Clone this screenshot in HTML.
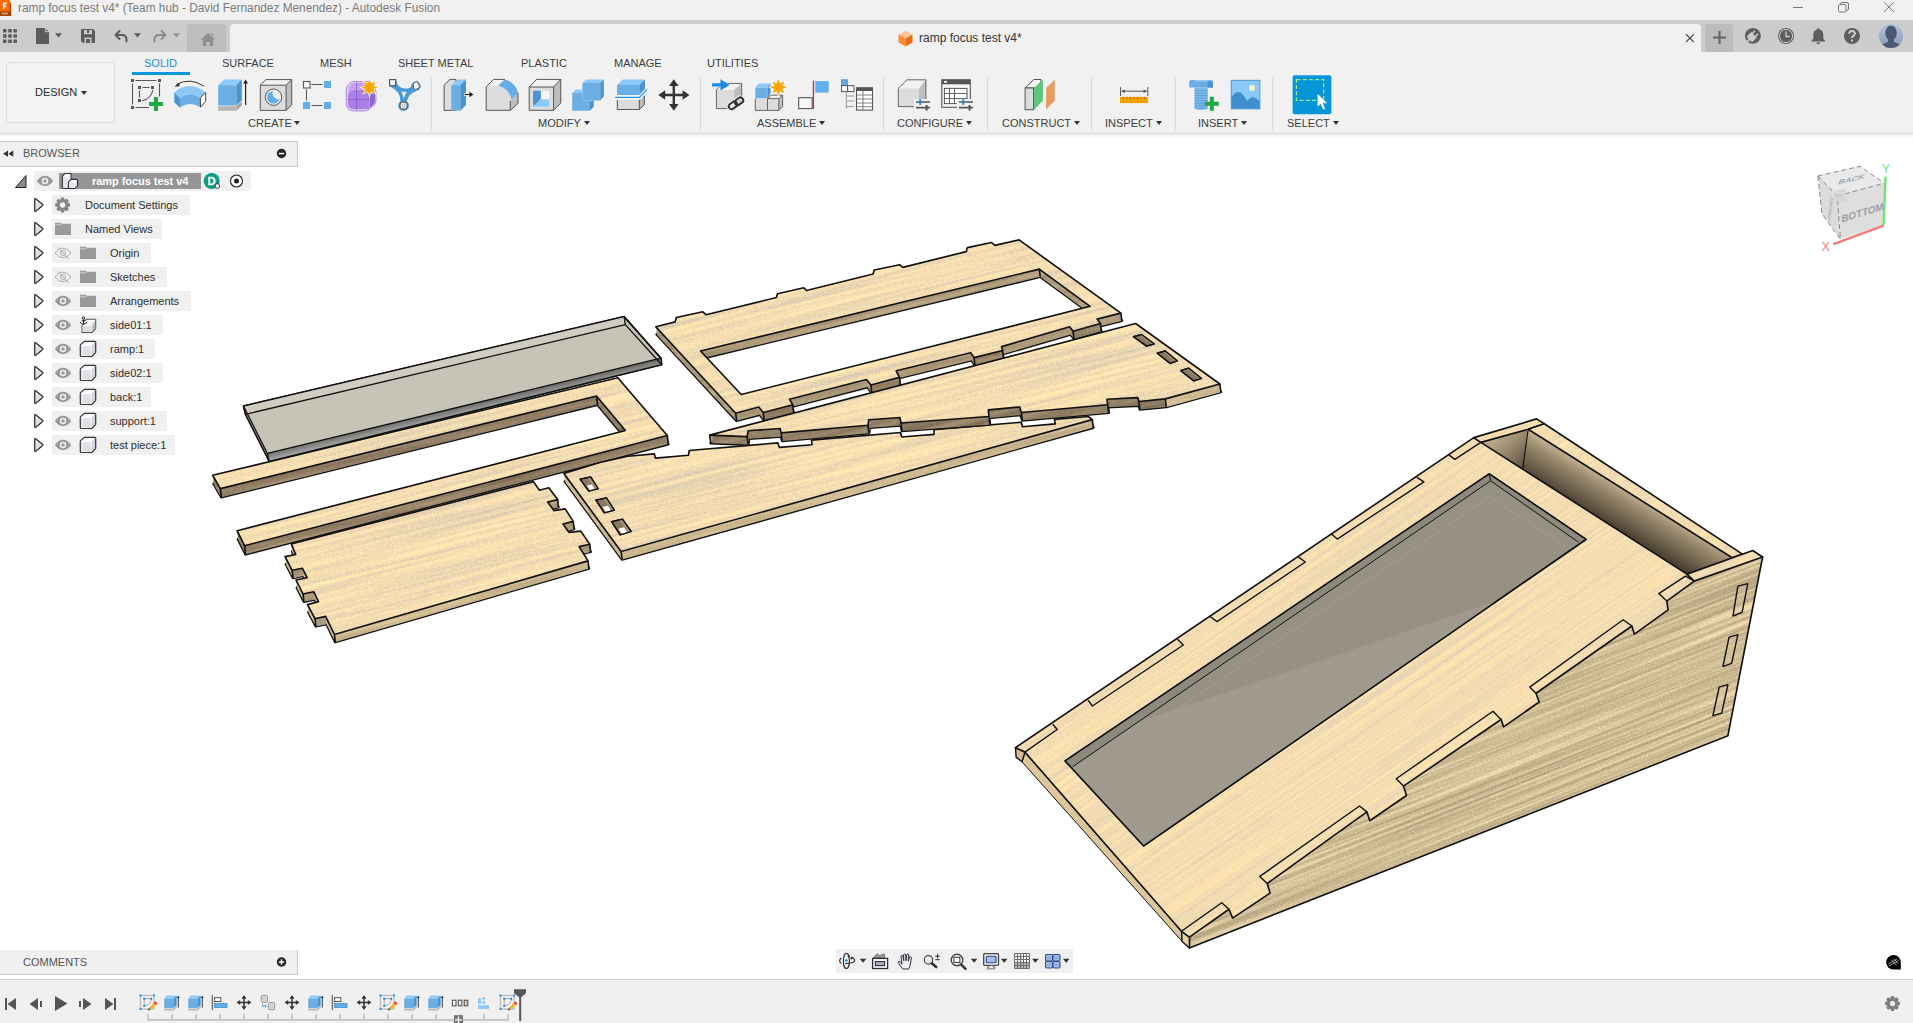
<!DOCTYPE html>
<html><head><meta charset="utf-8">
<style>
*{box-sizing:border-box;margin:0;padding:0}
html,body{width:1913px;height:1023px;overflow:hidden;background:#fff;font-family:"Liberation Sans",sans-serif;}
.abs{position:absolute}
#titlebar{left:0;top:0;width:1913px;height:20px;background:#f1f1f1}
#titletxt{left:18px;top:1px;font-size:11.85px;color:#7b7b7b;white-space:nowrap;line-height:15px}
#qat{left:0;top:20px;width:1913px;height:32px;background:#cccccc}
#hometab{left:187px;top:24px;width:39px;height:28px;background:#bdbdbd;border-radius:3px 3px 0 0}
#doctab{left:230px;top:24px;width:1471px;height:28px;background:#f1f1f1;border-radius:4px 4px 0 0}
#plustab{left:1705px;top:24px;width:28px;height:28px;background:#bcbcbc;border-radius:3px 3px 0 0}
#ribbon{left:0;top:52px;width:1913px;height:82px;background:#f1f1f1;border-bottom:1px solid #dadada}
#ribbonshadow{left:0;top:134px;width:1913px;height:3px;background:linear-gradient(#ececec,#fbfbfb)}
.tab{position:absolute;top:56px;font-size:11px;color:#3c3c3c;line-height:14px;white-space:nowrap}
.grp{position:absolute;top:116px;font-size:11px;color:#3c3c3c;line-height:14px;white-space:nowrap}
.sep{position:absolute;top:78px;width:1px;height:52px;background:#d9d9d9}
.dd{position:absolute;width:0;height:0;border-left:3.5px solid transparent;border-right:3.5px solid transparent;border-top:4px solid #333}
svg{position:absolute;overflow:visible}
.row{position:absolute;left:52px;height:20px;background:#f0f0f0}
.rtxt{position:absolute;font-size:11px;color:#2e2e2e;line-height:14px;white-space:nowrap}
.panel{position:absolute;left:0;width:298px;background:#f0f0f0;border:1px solid #c6c6c6;border-left:none}
.ptxt{position:absolute;left:23px;font-size:11px;color:#555;line-height:14px}
</style></head><body>

<!-- TITLE BAR + QAT -->
<div id="titlebar" class="abs"></div>
<div id="titletxt" class="abs">ramp focus test v4* (Team hub - David Fernandez Menendez) - Autodesk Fusion</div>
<div id="qat" class="abs"></div>
<div id="hometab" class="abs"></div>
<div id="doctab" class="abs"></div>
<div id="plustab" class="abs"></div>
<!-- app icon -->
<svg style="left:0;top:0" width="12" height="16" viewBox="0 0 12 16"><path d="M0 0H9.400L11.100 3.200V15.900H0Z" fill="#ff6b00"/><path d="M9.600 3.200H11.100V15.900H9.600Z" fill="#b84a00"/><path d="M0 11.300H11.100V15.900H0Z" fill="#a34200"/><rect x="1.600" y="12.500" width="6.200" height="1.900" fill="#dcae90" opacity=".85"/><path d="M2.900 2.500H6.700V3.900H4.500V5.200H6.300V6.600H4.500V8.800H2.900Z" fill="#fff"/></svg>
<!-- window controls -->
<svg style="left:1790px;top:0" width="123" height="20" viewBox="0 0 123 20" fill="none" stroke="#777" stroke-width="1">
<path d="M3 7.5H13"/><rect x="48.5" y="4.5" width="7.5" height="7.5" rx="1.3"/><path d="M50.5 4.5V3.8Q50.5 2.5 51.8 2.5H57Q58.5 2.5 58.5 4V9Q58.5 10.3 57.2 10.3H56.2"/>
<path d="M94 2.2L104 12M104 2.2L94 12"/></svg>
<!-- QAT icons -->
<svg style="left:0;top:20px" width="230" height="32" viewBox="0 20 230 32">
<g fill="#5c5c5c">
<rect x="3" y="29" width="3.6" height="3.6" rx=".6"/><rect x="8.2" y="29" width="3.6" height="3.6" rx=".6"/><rect x="13.4" y="29" width="3.6" height="3.6" rx=".6"/>
<rect x="3" y="34.2" width="3.6" height="3.6" rx=".6"/><rect x="8.2" y="34.2" width="3.6" height="3.6" rx=".6"/><rect x="13.4" y="34.2" width="3.6" height="3.6" rx=".6"/>
<rect x="3" y="39.4" width="3.6" height="3.6" rx=".6"/><rect x="8.2" y="39.4" width="3.6" height="3.6" rx=".6"/><rect x="13.4" y="39.4" width="3.6" height="3.6" rx=".6"/>
<path d="M36.8 28H45L49 32V43Q49 44 48 44H36.8Q36 44 36 43V29Q36 28 36.8 28Z"/>
<path d="M55 33.2H62L58.5 37.6Z"/>
<path d="M82 29H93L95 31V42Q95 43 94 43H83L81 41V30Q81 29 82 29Z"/>
<path d="M134 33.2H141L137.500 37.6Z"/>
</g>
<path d="M45.300 28.300V31.700H48.700" fill="none" stroke="#ccc" stroke-width="1"/>
<g fill="#ccc"><rect x="84" y="30" width="8" height="4.200"/><rect x="84.500" y="37.500" width="7" height="5.500"/></g>
<g fill="#5c5c5c"><rect x="87" y="30" width="2.200" height="3"/><rect x="86" y="39" width="4" height="4"/></g>
<path d="M119.500 31L115.500 35L119.500 39M115.800 35H122Q126.500 35 126.500 39.500V41.500" fill="none" stroke="#5c5c5c" stroke-width="2" stroke-linecap="round" stroke-linejoin="round"/>
<path d="M161.500 31L165.500 35L161.500 39M165.200 35H159Q154.500 35 154.500 39.500V41.500" fill="none" stroke="#8c8c8c" stroke-width="2" stroke-linecap="round" stroke-linejoin="round"/>
<path d="M173 33.200H180L176.500 37.600Z" fill="#959595"/>
<path d="M208 33L200.800 39.600H202.800V46H206.500V42H209.500V46H213.200V39.600H215.200ZM211.500 33.500H213V36L211.500 34.800Z" fill="#8f8f8f"/>
</svg>
<!-- doc tab title -->
<svg style="left:898px;top:30px" width="16" height="18" viewBox="0 0 16 18"><path d="M7.500 .800L14.500 4.500L7.500 8.500L.500 4.500Z" fill="#ffc49a"/><path d="M.500 4.500L7.500 8.500V16.500L.500 12.500Z" fill="#ff8a3c"/><path d="M14.500 4.500L7.500 8.500V16.500L14.500 12.500Z" fill="#f26a10"/></svg>
<div class="abs" style="left:919px;top:31px;font-size:12px;line-height:14px;color:#333;white-space:nowrap">ramp focus test v4*</div>
<!-- close tab x, plus, right icons -->
<svg style="left:1680px;top:20px" width="233" height="32" viewBox="1680 20 233 32">
<path d="M1686 34.200L1693.800 42M1693.800 34.200L1686 42" stroke="#555" stroke-width="1.300" fill="none"/>
<path d="M1719.500 31V44M1713 37.500H1726" stroke="#666" stroke-width="2.200" fill="none"/>
<g fill="#5e5e5e">
<circle cx="1752.900" cy="35.900" r="7.900"/>
<circle cx="1786" cy="36" r="8"/>
<path d="M1818.300 28.200Q1819.600 28.200 1819.600 29.600Q1823.300 30.600 1823.300 35V38.500L1825 40.800V41.500H1811.600V40.800L1813.300 38.500V35Q1813.300 30.600 1817 29.600Q1817 28.200 1818.300 28.200ZM1816.300 42.500H1820.300Q1820.300 44.300 1818.300 44.300Q1816.300 44.300 1816.300 42.500Z"/>
<circle cx="1852" cy="36" r="8"/>
</g>
<g transform="rotate(-45 1752.900 35.900) translate(1752.900 35.900)" fill="#ccc"><path d="M-5.200 -2Q-5.200 -4 -3.200 -4H1.600V4H-3.200Q-5.200 4 -5.200 2Z"/><rect x="1.400" y="-2.900" width="3.600" height="1.500"/><rect x="1.400" y="1.400" width="3.600" height="1.500"/><rect x="-9" y="-.900" width="5" height="1.800"/></g>
<circle cx="1786" cy="36" r="6.600" fill="none" stroke="#ccc" stroke-width="1"/>
<path d="M1786 31.500V36.500H1790" stroke="#ccc" stroke-width="1.300" fill="none"/>
<path d="M1849.200 33.800Q1849.200 31 1852 31Q1854.900 31 1854.900 33.500Q1854.900 35 1853.300 35.800Q1852 36.500 1852 38" stroke="#ccc" stroke-width="2" fill="none"/><rect x="1851" y="39.500" width="2" height="2" fill="#ccc"/>
<defs><clipPath id="avc"><circle cx="1891" cy="36" r="12"/></clipPath><linearGradient id="avg" x1="0" y1="0" x2="0" y2="1"><stop offset="0" stop-color="#b3c2d8"/><stop offset="1" stop-color="#8b9bb6"/></linearGradient></defs>
<circle cx="1891" cy="36" r="12" fill="url(#avg)"/>
<g clip-path="url(#avc)" fill="#4b5973"><ellipse cx="1891" cy="33" rx="5.800" ry="7.500"/><path d="M1888 38H1894V42Q1901 43.500 1903 49H1879Q1881 43.500 1888 42Z"/></g>
</svg>

<!-- RIBBON -->
<div id="ribbon" class="abs"></div>
<div id="ribbonshadow" class="abs"></div>
<div class="abs" style="left:6px;top:62px;width:109px;height:61px;border:1px solid #dcdcdc;border-radius:4px;background:#f3f3f3"></div>
<div class="abs" style="left:35px;top:85px;font-size:11px;line-height:14px;color:#2c2c2c">DESIGN</div>
<div class="dd" style="left:81px;top:91px"></div>
<div class="tab" style="left:144px;color:#1492d8">SOLID</div>
<div class="abs" style="left:132px;top:72px;width:58px;height:3px;background:#0696d7"></div>
<div class="tab" style="left:222px">SURFACE</div>
<div class="tab" style="left:320px">MESH</div>
<div class="tab" style="left:398px">SHEET METAL</div>
<div class="tab" style="left:521px">PLASTIC</div>
<div class="tab" style="left:614px">MANAGE</div>
<div class="tab" style="left:707px">UTILITIES</div>
<div class="grp" style="left:248px">CREATE</div><div class="dd" style="left:294px;top:121px"></div>
<div class="grp" style="left:538px">MODIFY</div><div class="dd" style="left:584px;top:121px"></div>
<div class="grp" style="left:757px">ASSEMBLE</div><div class="dd" style="left:819px;top:121px"></div>
<div class="grp" style="left:897px">CONFIGURE</div><div class="dd" style="left:966px;top:121px"></div>
<div class="grp" style="left:1002px">CONSTRUCT</div><div class="dd" style="left:1074px;top:121px"></div>
<div class="grp" style="left:1105px">INSPECT</div><div class="dd" style="left:1156px;top:121px"></div>
<div class="grp" style="left:1198px">INSERT</div><div class="dd" style="left:1241px;top:121px"></div>
<div class="grp" style="left:1287px">SELECT</div><div class="dd" style="left:1333px;top:121px"></div>
<div class="sep" style="left:431px"></div><div class="sep" style="left:700px"></div><div class="sep" style="left:883px"></div>
<div class="sep" style="left:987px"></div><div class="sep" style="left:1091px"></div><div class="sep" style="left:1175px"></div><div class="sep" style="left:1272px"></div>
<!-- RIBBON-ICONS -->
<svg style="left:0;top:52px" width="1913" height="82" viewBox="0 52 1913 82">
<defs>
<g id="star"><path d="M0 -8.500L1.600 -3.900L6 -6L3.900 -1.600L8.500 0L3.900 1.600L6 6L1.600 3.900L0 8.500L-1.600 3.900L-6 6L-3.900 1.600L-8.500 0L-3.900 -1.600L-6 -6L-1.600 -3.900Z" fill="#f7a500" stroke="#fff" stroke-width="1.200" paint-order="stroke"/></g>
<g id="plus"><path d="M-2 -7H2V-2H7V2H2V7H-2V2H-7V-2H-2Z" fill="#21a845"/></g>
</defs>
<!-- 1 create sketch -->
<g fill="#555" stroke="none">
<rect x="131" y="79" width="3" height="3"/><rect x="158" y="79" width="3" height="3"/><rect x="131" y="106" width="3" height="3"/>
<rect x="138" y="86" width="3" height="3"/><rect x="151" y="86" width="3" height="3"/><rect x="138" y="99" width="3" height="3"/>
</g>
<g stroke="#555" stroke-width="1.100" fill="none">
<path d="M135.500 80.500H156.500M132.500 83.500V104.500M159.500 83.500V96.500M135.500 107.500H149"/>
<path d="M142.500 87.500H149.500M139.500 90.500V97.500"/><path d="M152.800 90Q151.500 98.500 142 100.800"/>
</g>
<use href="#plus" x="156" y="104"/>
<!-- 2 revolve -->
<path d="M174.300 92.400Q189 79.800 205.600 92.400L200.200 97.800Q189.800 90.500 180 98.300Z" fill="#8cc8f8"/>
<path d="M180 98.300Q189.800 90.500 200.200 97.800V107.300Q189.800 100.500 180 107.700Z" fill="#6aaee4"/>
<path d="M174.300 92.400L180 98.300V107.700L174.300 102.300Z" fill="#4b92cf"/>
<path d="M200.300 97.800L205.700 92.600V101.400L200.500 107.200Z" fill="#fff" stroke="#444" stroke-width="1"/>
<path d="M203.800 86.100Q190 77 176.500 84.500" fill="none" stroke="#333" stroke-width="1"/><path d="M174.400 86.800L179.300 82.600L179.600 86.300Z" fill="#333"/>
<!-- 3 extrude -->
<path d="M218.200 85.200L224 79.400H241.800L236.400 85.200Z" fill="#8cc8f8"/><rect x="218.200" y="85.200" width="18.200" height="20.300" fill="#6aaee4"/>
<path d="M236.400 85.200L241.800 79.400V100.500L236.400 105.500Z" fill="#4b92cf"/>
<path d="M218.200 106.200H236.400V110.700H218.200Z" fill="#b6b6b6"/><path d="M236.400 106.200L241.800 101.200V105.500L236.400 110.700Z" fill="#a2a2a2"/>
<path d="M245.600 105V82" stroke="#222" stroke-width="1.200"/><path d="M243.200 83.600L245.600 79.600L248 83.600Z" fill="#222"/>
<!-- 4 hole -->
<path d="M260.300 85.200L265.800 79.600H291.700L286.100 85.200Z" fill="#f2f2f2"/><rect x="260.300" y="85.200" width="25.800" height="25.200" fill="#dcdcdc"/>
<path d="M286.100 85.200L291.700 79.600V105L286.100 110.400Z" fill="#bebebe"/>
<path d="M260.300 85.200L265.800 79.600H291.700V105L286.100 110.400H260.300ZM260.300 85.200H286.100V110.400M286.100 85.200L291.700 79.600" fill="none" stroke="#555" stroke-width="1"/>
<circle cx="273.500" cy="97.200" r="8.200" fill="#eee" stroke="#555" stroke-width="1"/>
<path d="M268.700 92.900A6.400 6.400 0 1 0 279.500 99.300A6 6 0 0 1 273 91.200A6.400 6.400 0 0 0 268.700 92.900Z" fill="#63aee8"/>
<!-- 5 pattern -->
<rect x="303.500" y="81.500" width="6.500" height="6.500" fill="#fff" stroke="#555" stroke-width="1.100"/>
<rect x="324" y="81" width="7" height="7" fill="#63aee8"/><rect x="303" y="102" width="7" height="7" fill="#63aee8"/><rect x="324" y="102" width="7" height="7" fill="#63aee8"/>
<path d="M311.500 84.500H322.500M306.500 89.500V100.500M311.500 105.500H322.500" stroke="#555" stroke-width="1.100" fill="none"/>
<!-- 6 form -->
<path d="M353 81.500H366Q376 82 376 92V101Q376 104 373 106L368 110Q366.500 111 364 111H354Q346.200 111 346.200 103V91Q346.200 84 353 81.500Z" fill="#d9c4f6" stroke="#a57be0" stroke-width=".800"/>
<path d="M355 90H366Q369 90 369 93V109H354Q348 109 348 103V96Q348 90 355 90Z" fill="#ab80e6"/>
<path d="M352.500 83.500Q356 82.500 365 83Q373.500 84 374 91L369 93Q369 89.500 365 89.500H354Q350 90 349 93Q348.500 86 352.500 83.500Z" fill="#c29df0"/>
<path d="M369.500 95L375 92V101Q375 103.500 373 105L369.500 108Z" fill="#9168cf"/>
<path d="M356.500 82.500V110M347.500 99.600H369" stroke="#8c62cb" stroke-width=".900" fill="none"/>
<use href="#star" x="369.500" y="87.500"/>
<!-- 7 Y shape -->
<path d="M390 86.500L396.300 80.500Q397.500 87.800 404.500 88.500L407.500 88.500Q411.800 88 412 83L416 91.200Q409.200 93 406.900 101L400.200 101Q400.800 91.500 390 86.500Z" fill="#4b9ad8"/>
<path d="M401.500 91.500L406.600 92L403.700 98Z" fill="#eef2f6"/>
<rect x="389.600" y="79.600" width="6.100" height="6.100" fill="#fff" stroke="#555" stroke-width="1.200"/>
<circle cx="416" cy="86.200" r="4.600" fill="#4b9ad8"/><path d="M413.200 84.200Q413.800 82.500 416 81.800L417 81.300L420.300 87L415.500 89.800Q412.500 88.500 413.200 84.200Z" fill="#f6f6f6" stroke="#555" stroke-width="1" stroke-linejoin="round"/>
<circle cx="403.600" cy="105.500" r="5.400" fill="#4b9ad8"/><circle cx="403.600" cy="105.500" r="3.700" fill="#fff" stroke="#555" stroke-width="1.200"/><circle cx="403.600" cy="105.500" r="1.600" fill="none" stroke="#777" stroke-width=".700"/>
<!-- 8 press pull -->
<path d="M444.100 85.200L450 79.400H456V110.400H444.100Z" fill="#dedede" stroke="#555" stroke-width="1"/>
<path d="M451.300 85.200L457.200 79.400H466L460.300 85.200Z" fill="#8cc8f8"/><rect x="451.300" y="85.200" width="9" height="25.500" fill="#6aaee4"/>
<path d="M460.300 85.200L466 79.400V105L460.300 110.700Z" fill="#4b92cf"/>
<path d="M464 94.500H470" stroke="#fff" stroke-width="2.600"/><path d="M464.500 94.500H470" stroke="#222" stroke-width="1.200"/><path d="M469.500 91.800L473.500 94.500L469.500 97.200Z" fill="#222"/>
<!-- 9 fillet -->
<path d="M486.200 87L493.400 79.400H504.900Q514 82 518 92.600L517.900 103.500L510.300 110.300H486.200Z" fill="#dcdcdc"/>
<path d="M486.200 87L493.400 79.400H504.900L498.300 85.400Q493 87 486.200 87Z" fill="#f2f2f2"/>
<path d="M511.500 99.200L518 92.600L517.900 103.500L510.300 110.300V101Z" fill="#bebebe"/>
<path d="M498.300 85.400L504.900 79.400Q515 82 518.100 92.600L511.500 99.200Q509 88.500 498.300 85.400Z" fill="#63aee8"/>
<path d="M486.200 87L493.400 79.400H504.900M518 93V103.500L510.300 110.300H486.200V87M510.300 110.300V101" fill="none" stroke="#555" stroke-width="1"/>
<!-- 10 shell -->
<path d="M529.200 87L536.500 79.400H560.800L553.600 87Z" fill="#f2f2f2"/><rect x="529.200" y="87" width="24.400" height="23.300" fill="#dcdcdc"/>
<path d="M553.600 87L560.800 79.400V102.900L553.600 110.300Z" fill="#bebebe"/>
<path d="M529.200 87L536.500 79.400H560.800V102.900L553.600 110.300H529.200ZM529.200 87H553.600V110.300M553.600 87L560.800 79.400" fill="none" stroke="#555" stroke-width="1"/>
<rect x="533.100" y="90.800" width="16" height="15.900" fill="#f6f6f6"/>
<path d="M533.100 90.800H540.900V99.200L533.100 106.700Z" fill="#4b92cf"/><path d="M540.900 99.200H549.100V106.700H533.100Z" fill="#8cc8f8"/>
<!-- 11 combine -->
<path d="M582.400 83L586 79.400H603.800L600.200 83Z" fill="#8cc8f8"/><rect x="582.400" y="83" width="17.800" height="17.500" fill="#6aaee4"/><path d="M600.200 83L603.800 79.400V96.200L600.200 100.500Z" fill="#4b92cf"/>
<path d="M572.200 93L575.800 89.400H583V93Z" fill="#8cc8f8"/><path d="M572.200 93H582.400V100.500H590V110.700H572.200Z" fill="#6aaee4"/><path d="M590 101L593.800 100.500V106.500L590 110.700Z" fill="#4b92cf"/>
<!-- 12 split -->
<path d="M617 85L622.700 79.400H645L639.300 85Z" fill="#8cc8f8"/><rect x="617" y="85" width="22.300" height="10" fill="#6aaee4"/><path d="M639.300 85L645 79.400V89L639.300 95Z" fill="#4b92cf"/>
<rect x="617.300" y="99.900" width="22" height="9.600" fill="#dcdcdc"/><path d="M639.300 99.900L644.300 95.600V104.700L639.300 109.500Z" fill="#bebebe"/>
<path d="M617.300 99.900V109.500H639.300L644.300 104.700V95.600M639.300 99.900V109.500" fill="none" stroke="#555" stroke-width="1"/>
<path d="M615.100 97.400H639.500L646.700 89.600" fill="none" stroke="#fff" stroke-width="3"/><path d="M615.100 97.400H639.500L646.700 89.600" fill="none" stroke="#1e90e6" stroke-width="1.300"/>
<!-- 13 move -->
<path d="M673.800 83V107M662 95H686" stroke="#333" stroke-width="2.400"/><path d="M673.800 79.200L678.600 86H669ZM673.800 110.800L678.600 104H669ZM658.300 95L665.200 90.200V99.800ZM689.500 95L682.600 90.200V99.800Z" fill="#333"/>
<!-- 14 insert derive -->
<path d="M716.400 89.900L722.700 83.400H741.700L734.100 89.900Z" fill="#f2f2f2"/><rect x="716.400" y="89.900" width="17.700" height="18.700" fill="#dcdcdc"/><path d="M734.100 89.900L741.700 83.400V99.800L734.100 108.600Z" fill="#bebebe"/>
<path d="M716.400 89.900L722.700 83.400H741.700V99.800L734.100 108.600H716.400Z" fill="none" stroke="#666" stroke-width="1"/>
<path d="M712.100 83.300H720.500V79.300L729.600 84.900L720.500 90.400V86.500H712.100Z" fill="#1e88e5" stroke="#f1f1f1" stroke-width=".800" paint-order="stroke"/>
<g fill="none" stroke="#f1f1f1" stroke-width="4.200"><rect x="728.500" y="102.500" width="9" height="5.600" rx="2.800" transform="rotate(-35 733 105.300)"/><rect x="734.500" y="98.500" width="9" height="5.600" rx="2.800" transform="rotate(-35 739 101.300)"/></g>
<g fill="none" stroke="#333" stroke-width="2"><rect x="728.500" y="102.500" width="9" height="5.600" rx="2.800" transform="rotate(-35 733 105.300)"/><rect x="734.500" y="98.500" width="9" height="5.600" rx="2.800" transform="rotate(-35 739 101.300)"/></g>
<!-- 15 new component -->
<path d="M755.300 87.600L758.400 83.400H770.500L767.500 87.600Z" fill="#8cc8f8"/><rect x="755.300" y="87.600" width="12.200" height="10.700" fill="#6aaee4"/><path d="M767.500 87.600L770.500 83.400V93.700L767.500 98.300Z" fill="#4b92cf"/>
<path d="M767.500 98.600L771.200 95.200H782.600L778.800 98.600Z" fill="#f2f2f2"/><rect x="755.300" y="98.600" width="23.500" height="11.800" fill="#dcdcdc"/><path d="M778.800 98.600L782.600 95.200V106.600L778.800 110.400Z" fill="#bebebe"/>
<path d="M755.300 98.600V110.400H778.800L782.600 106.600V95.200H771.200L767.500 98.600H778.800V110.400M767.500 98.600V110.400M778.800 98.600L782.600 95.200" fill="none" stroke="#666" stroke-width="1"/>
<use href="#star" x="778.400" y="87.300"/>
<!-- 16 joint -->
<rect x="798.700" y="97.700" width="13.500" height="10.900" fill="#f6f6f6" stroke="#555" stroke-width="1.100"/>
<rect x="815.200" y="81.100" width="13.600" height="11.500" fill="#63aee8"/>
<path d="M813.400 80.800V108.900" stroke="#d9262c" stroke-width="1.300"/>
<!-- 17 table -->
<rect x="841.500" y="79.800" width="6" height="5.800" fill="#63aee8" stroke="#4b92cf" stroke-width=".800"/>
<rect x="841.500" y="85.600" width="6.200" height="6" fill="#fff" stroke="#555" stroke-width="1"/><rect x="847.700" y="85.600" width="6.200" height="6" fill="#fff" stroke="#555" stroke-width="1"/>
<path d="M846.300 92V108.500M846.300 96H854M846.300 101H854M846.300 106.500H854" stroke="#999" stroke-width="1" fill="none"/>
<rect x="856.500" y="87.800" width="16" height="22.300" fill="#fff" stroke="#555" stroke-width="1.100"/><rect x="856.500" y="87.800" width="16" height="3.200" fill="#555"/>
<path d="M856.500 95H872.500M856.500 99H872.500M856.500 103H872.500M856.500 106.700H872.500M863 91V110" stroke="#666" stroke-width=".800" fill="none"/>
<!-- 18 configure -->
<path d="M898.300 88.400L906.900 79.800H925.900L919 88.400Z" fill="#f2f2f2"/><rect x="898.300" y="88.400" width="20.700" height="18.200" fill="#dcdcdc"/><path d="M919 88.400L925.900 79.800V99L919 106.600Z" fill="#bebebe"/>
<path d="M898.300 88.400L906.900 79.800H925.900V99L919 106.600H898.300Z" fill="none" stroke="#666" stroke-width="1"/>
<g id="sliders"><path d="M914 99H931V111H914Z" fill="#f1f1f1"/><path d="M916 102H930M916 107.600H930" stroke="#555" stroke-width="1.600"/><rect x="919.200" y="99.300" width="2" height="5.600" fill="#1e88e5"/><rect x="925.600" y="105" width="2" height="5.600" fill="#555"/></g>
<!-- 19 configure table -->
<rect x="941.800" y="79.800" width="28.500" height="27.500" fill="#f6f6f6" stroke="#555" stroke-width="1.100"/><rect x="941.800" y="79.800" width="28.500" height="4.500" fill="#555"/><rect x="944" y="81" width="3" height="1.600" fill="#fff"/>
<rect x="944.400" y="88.400" width="22.600" height="15.200" fill="#fff" stroke="#555" stroke-width="1"/><path d="M944.400 93.500H967M944.400 98.500H967M949.500 88.400V103.600M954.500 88.400V103.600" stroke="#555" stroke-width=".900" fill="none"/>
<use href="#sliders" x="43" y="0"/>
<!-- 20 construct -->
<path d="M1025.100 88L1034 79.500H1041V88Z" fill="#f2f2f2" stroke="#555" stroke-width="1"/><rect x="1025.100" y="88" width="8.500" height="21.700" fill="#dcdcdc" stroke="#555" stroke-width="1"/>
<path d="M1034 88L1042.900 79.500V100.400L1034 109.700Z" fill="#5cc47c"/><path d="M1046.100 88L1054.800 79.500V100.400L1046.100 109.700Z" fill="#e89b62"/>
<!-- 21 inspect -->
<path d="M1120.600 87.100V96M1147.800 87.100V96M1122 91.200H1146.500" stroke="#555" stroke-width="1" fill="none"/><path d="M1121.200 91.200L1124.800 89.400V93ZM1147.200 91.200L1143.600 89.400V93Z" fill="#555"/>
<rect x="1120" y="96.900" width="28" height="6.200" fill="#f5a300"/><path d="M1123.500 97V99.500M1127 97V98.700M1130.500 97V99.500M1134 97V98.700M1137.500 97V99.500M1141 97V98.700M1144.500 97V99.500" stroke="#9a6500" stroke-width=".900"/>
<!-- 22 bolt -->
<path d="M1189.200 81.500L1190.500 80H1211.700L1213 81.500V87.600H1189.200Z" fill="#6aaee4"/><path d="M1195 80H1208L1209 81.500H1194Z" fill="#8cc8f8"/><path d="M1207.500 81.500H1213V87.600H1207.500Z" fill="#4b92cf"/>
<path d="M1194.500 87.600H1207.700V108.500Q1201 111.500 1194.500 108.500Z" fill="#7ab8ea"/>
<path d="M1194.500 90.500H1207.700M1194.500 93H1207.700M1194.500 95.500H1207.700M1194.500 98H1207.700M1194.500 100.500H1207.700M1194.500 103H1207.700M1194.500 105.500H1207.700M1194.500 108H1207.700" stroke="#5a9bd8" stroke-width=".800"/>
<path d="M1202.200 95.500H1220.500V111.500H1202.200Z" fill="#f1f1f1" opacity=".0"/>
<use href="#plus" x="1211.800" y="103.800"/>
<!-- 23 image -->
<rect x="1231.200" y="80.300" width="28.700" height="28.600" fill="#8cc8f8" stroke="#4b92cf" stroke-width=".900"/>
<path d="M1231.600 97Q1238 88 1243.500 95.500L1247.500 101Q1252.500 93.500 1259.500 101.500V108.500H1231.600Z" fill="#3f8fd0"/><circle cx="1252.100" cy="88" r="2.900" fill="#fff5c0"/>
<!-- 24 select -->
<rect x="1292.600" y="75.300" width="38.800" height="39" rx="2" fill="#0696d7"/>
<rect x="1296.400" y="79.600" width="27.300" height="20.800" fill="none" stroke="#98f098" stroke-width="1.200" stroke-dasharray="4 2.200"/>
<path d="M1317.200 93.300V107.200L1320.600 104.300L1323 110L1325.600 108.900L1323.200 103.400L1327.800 103.200Z" fill="#fff" stroke="#0a6aa8" stroke-width=".500"/>
</svg>

<!-- VIEWPORT -->
<svg style="left:0;top:137px" width="1913" height="842" viewBox="0 137 1913 842">
<defs>
<filter id="fw" x="0" y="0" width="100%" height="100%" color-interpolation-filters="sRGB"><feTurbulence type="fractalNoise" baseFrequency="0.004 0.3" numOctaves="2" seed="3" stitchTiles="stitch" result="n1"/><feTurbulence type="fractalNoise" baseFrequency="0.85 0.85" numOctaves="1" seed="7" stitchTiles="stitch" result="n2"/><feColorMatrix in="n1" type="matrix" values="0.3 0 0 0 0.7900  0.19 0 0 0 0.7480  0.0 0 0 0 0.6770  0 0 0 0 1" result="c1"/><feColorMatrix in="n2" type="matrix" values="0.5 0 0 0 -0.25  0.5 0 0 0 -0.25  0.5 0 0 0 -0.25  0 0 0 0 1" result="c2"/><feComposite in="c1" in2="c2" operator="arithmetic" k1="0" k2="1" k3="1" k4="0"/></filter>
<filter id="fwr" x="0" y="0" width="100%" height="100%" color-interpolation-filters="sRGB"><feTurbulence type="fractalNoise" baseFrequency="0.003 0.42" numOctaves="2" seed="13" stitchTiles="stitch" result="n1"/><feTurbulence type="fractalNoise" baseFrequency="0.8 0.8" numOctaves="1" seed="17" stitchTiles="stitch" result="n2"/><feColorMatrix in="n1" type="matrix" values="0.22 0 0 0 0.8420  0.12 0 0 0 0.7950  -0.04 0 0 0 0.7050  0 0 0 0 1" result="c1"/><feColorMatrix in="n2" type="matrix" values="0.25 0 0 0 -0.125  0.25 0 0 0 -0.125  0.25 0 0 0 -0.125  0 0 0 0 1" result="c2"/><feComposite in="c1" in2="c2" operator="arithmetic" k1="0" k2="1" k3="1" k4="0"/></filter>
<filter id="fd" x="0" y="0" width="100%" height="100%" color-interpolation-filters="sRGB"><feTurbulence type="fractalNoise" baseFrequency="0.01 0.2" numOctaves="2" seed="5" stitchTiles="stitch" result="n1"/><feTurbulence type="fractalNoise" baseFrequency="0.9 0.9" numOctaves="1" seed="9" stitchTiles="stitch" result="n2"/><feColorMatrix in="n1" type="matrix" values="0.25 0 0 0 0.4320  0.25 0 0 0 0.3650  0.22 0 0 0 0.2740  0 0 0 0 1" result="c1"/><feColorMatrix in="n2" type="matrix" values="0.4 0 0 0 -0.2  0.4 0 0 0 -0.2  0.4 0 0 0 -0.2  0 0 0 0 1" result="c2"/><feComposite in="c1" in2="c2" operator="arithmetic" k1="0" k2="1" k3="1" k4="0"/></filter>
<filter id="fdm" x="0" y="0" width="100%" height="100%" color-interpolation-filters="sRGB"><feTurbulence type="fractalNoise" baseFrequency="0.01 0.2" numOctaves="2" seed="6" stitchTiles="stitch" result="n1"/><feTurbulence type="fractalNoise" baseFrequency="0.9 0.9" numOctaves="1" seed="10" stitchTiles="stitch" result="n2"/><feColorMatrix in="n1" type="matrix" values="0.25 0 0 0 0.5350  0.25 0 0 0 0.4650  0.22 0 0 0 0.3550  0 0 0 0 1" result="c1"/><feColorMatrix in="n2" type="matrix" values="0.4 0 0 0 -0.2  0.4 0 0 0 -0.2  0.4 0 0 0 -0.2  0 0 0 0 1" result="c2"/><feComposite in="c1" in2="c2" operator="arithmetic" k1="0" k2="1" k3="1" k4="0"/></filter>
<filter id="fdl" x="0" y="0" width="100%" height="100%" color-interpolation-filters="sRGB"><feTurbulence type="fractalNoise" baseFrequency="0.01 0.2" numOctaves="2" seed="8" stitchTiles="stitch" result="n1"/><feTurbulence type="fractalNoise" baseFrequency="0.9 0.9" numOctaves="1" seed="12" stitchTiles="stitch" result="n2"/><feColorMatrix in="n1" type="matrix" values="0.2 0 0 0 0.6900  0.2 0 0 0 0.6100  0.18 0 0 0 0.4600  0 0 0 0 1" result="c1"/><feColorMatrix in="n2" type="matrix" values="0.35 0 0 0 -0.175  0.35 0 0 0 -0.175  0.35 0 0 0 -0.175  0 0 0 0 1" result="c2"/><feComposite in="c1" in2="c2" operator="arithmetic" k1="0" k2="1" k3="1" k4="0"/></filter>
<filter id="fm" x="0" y="0" width="100%" height="100%" color-interpolation-filters="sRGB"><feTurbulence type="fractalNoise" baseFrequency="0.0025 0.36" numOctaves="2" seed="11" stitchTiles="stitch" result="n1"/><feTurbulence type="fractalNoise" baseFrequency="0.8 0.8" numOctaves="1" seed="15" stitchTiles="stitch" result="n2"/><feColorMatrix in="n1" type="matrix" values="0.46 0 0 0 0.5660  0.43 0 0 0 0.5080  0.38 0 0 0 0.3790  0 0 0 0 1" result="c1"/><feColorMatrix in="n2" type="matrix" values="0.5 0 0 0 -0.25  0.5 0 0 0 -0.25  0.5 0 0 0 -0.25  0 0 0 0 1" result="c2"/><feComposite in="c1" in2="c2" operator="arithmetic" k1="0" k2="1" k3="1" k4="0"/></filter>
<pattern id="pw0" width="640" height="320" patternUnits="userSpaceOnUse"><rect width="640" height="320" filter="url(#fw)"/></pattern>
<pattern id="pwr0" width="640" height="320" patternUnits="userSpaceOnUse"><rect width="640" height="320" filter="url(#fwr)"/></pattern>
<pattern id="pd0" width="640" height="320" patternUnits="userSpaceOnUse"><rect width="640" height="320" filter="url(#fd)"/></pattern>
<pattern id="pdm0" width="640" height="320" patternUnits="userSpaceOnUse"><rect width="640" height="320" filter="url(#fdm)"/></pattern>
<pattern id="pdl0" width="640" height="320" patternUnits="userSpaceOnUse"><rect width="640" height="320" filter="url(#fdl)"/></pattern>
<pattern id="pm0" width="640" height="320" patternUnits="userSpaceOnUse"><rect width="640" height="320" filter="url(#fm)"/></pattern>
<pattern id="pw" href="#pw0" patternTransform="rotate(-14)"/>
<pattern id="pd" href="#pd0" patternTransform="rotate(-14)"/>
<pattern id="pdm" href="#pdm0" patternTransform="rotate(-14)"/>
<pattern id="pdl" href="#pdl0" patternTransform="rotate(-14)"/>
<pattern id="pwr" href="#pwr0" patternTransform="rotate(-34)"/>
<pattern id="pmr" href="#pm0" patternTransform="rotate(-21.5)"/>
<linearGradient id="gglass" gradientUnits="userSpaceOnUse" x1="460" y1="406.9" x2="461.9" y2="414.9"><stop offset="0" stop-color="#6b6b6a"/><stop offset="1" stop-color="#a8a8a6"/></linearGradient>
<linearGradient id="gback" gradientUnits="userSpaceOnUse" x1="1633" y1="493" x2="1612" y2="528"><stop offset="0" stop-color="#c2b191"/><stop offset=".3" stop-color="#96866a"/><stop offset=".7" stop-color="#6a5e4a"/><stop offset="1" stop-color="#453c2f"/></linearGradient>
<linearGradient id="gleft" gradientUnits="userSpaceOnUse" x1="1495" y1="437" x2="1524" y2="466"><stop offset="0" stop-color="#bcab8b"/><stop offset=".5" stop-color="#94846a"/><stop offset="1" stop-color="#5d5241"/></linearGradient>
</defs>
<path d="M213.7 483.9L618.8 386.4L668.3 444.1L245.6 554.3L238.1 539.3L626.4 439.1L597.5 404.6L221.3 497.2Z" fill="url(#pd)" fill-rule="evenodd" stroke="#111" stroke-width="2.65" stroke-linejoin="round"/>
<path d="M213.7 483.9L618.8 386.4L668.3 444.1L245.6 554.3L238.1 539.3L626.4 439.1L597.5 404.6L221.3 497.2Z" fill="url(#pd)" fill-rule="evenodd"/>
<path d="M213.7 483.4L618.8 385.9L668.3 443.6L245.6 553.8L238.1 538.8L626.4 438.6L597.5 404.1L221.3 496.7Z" fill="url(#pd)" fill-rule="evenodd"/>
<path d="M213.6 482.9L618.7 385.4L668.2 443.1L245.5 553.3L238.0 538.3L626.3 438.1L597.4 403.6L221.2 496.2Z" fill="url(#pd)" fill-rule="evenodd"/>
<path d="M213.5 482.4L618.6 384.9L668.1 442.6L245.4 552.8L237.9 537.8L626.2 437.6L597.3 403.1L221.1 495.7Z" fill="url(#pd)" fill-rule="evenodd"/>
<path d="M213.5 481.9L618.6 384.4L668.1 442.1L245.4 552.3L237.9 537.3L626.2 437.1L597.3 402.6L221.1 495.2Z" fill="url(#pd)" fill-rule="evenodd"/>
<path d="M213.4 481.4L618.5 383.9L668.0 441.6L245.3 551.8L237.8 536.8L626.1 436.6L597.2 402.1L221.0 494.7Z" fill="url(#pd)" fill-rule="evenodd"/>
<path d="M213.4 480.9L618.5 383.4L668.0 441.1L245.3 551.3L237.8 536.3L626.1 436.1L597.2 401.6L221.0 494.2Z" fill="url(#pd)" fill-rule="evenodd"/>
<path d="M213.3 480.4L618.4 382.9L667.9 440.6L245.2 550.8L237.7 535.8L626.0 435.6L597.1 401.1L220.9 493.7Z" fill="url(#pd)" fill-rule="evenodd"/>
<path d="M213.2 479.9L618.3 382.4L667.8 440.1L245.1 550.3L237.6 535.3L625.9 435.1L597.0 400.6L220.8 493.2Z" fill="url(#pd)" fill-rule="evenodd"/>
<path d="M213.2 479.3L618.3 381.8L667.8 439.5L245.1 549.7L237.6 534.7L625.9 434.5L597.0 400.0L220.8 492.6Z" fill="url(#pd)" fill-rule="evenodd"/>
<path d="M213.1 478.8L618.2 381.3L667.7 439.0L245.0 549.2L237.5 534.2L625.8 434.0L596.9 399.5L220.7 492.1Z" fill="url(#pd)" fill-rule="evenodd"/>
<path d="M213.1 478.3L618.2 380.8L667.7 438.5L245.0 548.7L237.5 533.7L625.8 433.5L596.9 399.0L220.7 491.6Z" fill="url(#pd)" fill-rule="evenodd"/>
<path d="M213.0 477.8L618.1 380.3L667.6 438.0L244.9 548.2L237.4 533.2L625.7 433.0L596.8 398.5L220.6 491.1Z" fill="url(#pd)" fill-rule="evenodd"/>
<path d="M212.9 477.3L618.0 379.8L667.5 437.5L244.8 547.7L237.3 532.7L625.6 432.5L596.7 398.0L220.5 490.6Z" fill="url(#pd)" fill-rule="evenodd"/>
<path d="M212.9 476.8L618.0 379.3L667.5 437.0L244.8 547.2L237.3 532.2L625.6 432.0L596.7 397.5L220.5 490.1Z" fill="url(#pd)" fill-rule="evenodd"/>
<path d="M212.8 476.3L617.9 378.8L667.4 436.5L244.7 546.7L237.2 531.7L625.5 431.5L596.6 397.0L220.4 489.6Z" fill="url(#pd)" fill-rule="evenodd"/>
<path d="M212.8 475.8L617.9 378.3L667.4 436.0L244.7 546.2L237.2 531.2L625.5 431.0L596.6 396.5L220.4 489.1Z" fill="url(#pd)" fill-rule="evenodd"/>
<path d="M667.3 435.5L668.3 444.1" stroke="#111" stroke-width="1.65" fill="none"/>
<path d="M244.6 545.7L245.6 554.3" stroke="#111" stroke-width="1.65" fill="none"/>
<path d="M220.3 488.6L221.3 497.2" stroke="#111" stroke-width="1.65" fill="none"/>
<path d="M596.5 396.0L597.5 404.6" stroke="#111" stroke-width="1.65" fill="none"/>
<path d="M212.7 475.3L617.8 377.8L667.3 435.5L244.6 545.7L237.1 530.7L625.4 430.5L596.5 396.0L220.3 488.6Z" fill="url(#pw)" fill-rule="evenodd" stroke="#111" stroke-width="1.65" stroke-linejoin="round"/>
<path d="M243.5 406.0L624.1 316.6L661.0 358.2L661.7 364.7L269.2 461.3L245.5 414.3Z" fill="#c8c3b7" stroke="#111" stroke-width="1.65" stroke-linejoin="round"/>
<path d="M243.5 406.0L624.1 316.6L625.3 324.6L245.5 414.3Z" fill="#d0ccc2"/>
<path d="M267.3 453.4L661.0 358.2L661.7 364.7L269.2 461.3Z" fill="url(#gglass)"/>
<path d="M243.5 406.0L267.3 453.4L269.2 461.3L245.5 414.3Z" fill="#aaa69c"/>
<path d="M245.5 414.3L625.3 324.6L661.7 364.7M624.1 316.6L625.3 324.6M267.3 453.4L661 358.2M243.5 406L267.3 453.4L269.2 461.3M243.5 406L624.1 316.6L661 358.2L661.7 364.7L269.2 461.3L245.5 414.3Z" fill="none" stroke="#111" stroke-width="1.3" stroke-linejoin="round"/>
<path d="M292.2 551.5L534.3 489.2L540.3 497.8L549.7 495.3L558.5 507.2L548.6 509.6L554.8 518.2L566.1 516.5L574.1 529.0L563.9 531.6L569.8 540.0L581.7 538.7L590.6 551.8L580.0 554.2L588.9 568.5L335.3 642.1L326.5 624.0L315.9 626.3L308.4 612.2L319.4 609.2L314.7 599.4L303.9 601.6L296.9 587.6L308.0 585.3L303.2 575.8L293.0 577.9L286.0 564.2L296.6 562.1Z" fill="url(#pdl)" fill-rule="evenodd" stroke="#111" stroke-width="2.65" stroke-linejoin="round"/>
<path d="M292.2 551.5L534.3 489.2L540.3 497.8L549.7 495.3L558.5 507.2L548.6 509.6L554.8 518.2L566.1 516.5L574.1 529.0L563.9 531.6L569.8 540.0L581.7 538.7L590.6 551.8L580.0 554.2L588.9 568.5L335.3 642.1L326.5 624.0L315.9 626.3L308.4 612.2L319.4 609.2L314.7 599.4L303.9 601.6L296.9 587.6L308.0 585.3L303.2 575.8L293.0 577.9L286.0 564.2L296.6 562.1Z" fill="url(#pdl)" fill-rule="evenodd"/>
<path d="M292.2 551.0L534.3 488.7L540.3 497.3L549.7 494.8L558.5 506.7L548.6 509.1L554.8 517.7L566.1 516.0L574.1 528.5L563.9 531.1L569.8 539.5L581.7 538.2L590.6 551.3L580.0 553.7L588.9 568.0L335.3 641.6L326.5 623.5L315.9 625.8L308.4 611.7L319.4 608.7L314.7 598.9L303.9 601.1L296.9 587.1L308.0 584.8L303.2 575.3L293.0 577.4L286.0 563.7L296.6 561.6Z" fill="url(#pdl)" fill-rule="evenodd"/>
<path d="M292.1 550.5L534.2 488.2L540.2 496.8L549.6 494.3L558.4 506.2L548.5 508.6L554.7 517.2L566.0 515.5L574.0 528.0L563.8 530.6L569.7 539.0L581.6 537.7L590.5 550.8L579.9 553.2L588.8 567.5L335.2 641.1L326.4 623.0L315.8 625.3L308.3 611.2L319.3 608.2L314.6 598.4L303.8 600.6L296.8 586.6L307.9 584.3L303.1 574.8L292.9 576.9L285.9 563.2L296.5 561.1Z" fill="url(#pdl)" fill-rule="evenodd"/>
<path d="M292.0 550.0L534.1 487.7L540.1 496.3L549.5 493.8L558.3 505.7L548.4 508.1L554.6 516.7L565.9 515.0L573.9 527.5L563.7 530.1L569.6 538.5L581.5 537.2L590.4 550.3L579.8 552.7L588.7 567.0L335.1 640.6L326.3 622.5L315.7 624.8L308.2 610.7L319.2 607.7L314.5 597.9L303.7 600.1L296.7 586.1L307.8 583.8L303.0 574.3L292.8 576.4L285.8 562.7L296.4 560.6Z" fill="url(#pdl)" fill-rule="evenodd"/>
<path d="M292.0 549.5L534.1 487.2L540.1 495.8L549.5 493.3L558.3 505.2L548.4 507.6L554.6 516.2L565.9 514.5L573.9 527.0L563.7 529.6L569.6 538.0L581.5 536.7L590.4 549.8L579.8 552.2L588.7 566.5L335.1 640.1L326.3 622.0L315.7 624.3L308.2 610.2L319.2 607.2L314.5 597.4L303.7 599.6L296.7 585.6L307.8 583.3L303.0 573.8L292.8 575.9L285.8 562.2L296.4 560.1Z" fill="url(#pdl)" fill-rule="evenodd"/>
<path d="M291.9 549.0L534.0 486.7L540.0 495.3L549.4 492.8L558.2 504.7L548.3 507.1L554.5 515.7L565.8 514.0L573.8 526.5L563.6 529.1L569.5 537.5L581.4 536.2L590.3 549.3L579.7 551.7L588.6 566.0L335.0 639.6L326.2 621.5L315.6 623.8L308.1 609.7L319.1 606.7L314.4 596.9L303.6 599.1L296.6 585.1L307.7 582.8L302.9 573.3L292.7 575.4L285.7 561.7L296.3 559.6Z" fill="url(#pdl)" fill-rule="evenodd"/>
<path d="M291.8 548.5L533.9 486.2L539.9 494.8L549.3 492.3L558.1 504.2L548.2 506.6L554.4 515.2L565.7 513.5L573.7 526.0L563.5 528.6L569.4 537.0L581.3 535.7L590.2 548.8L579.6 551.2L588.5 565.5L334.9 639.1L326.1 621.0L315.5 623.3L308.0 609.2L319.0 606.2L314.3 596.4L303.5 598.6L296.5 584.6L307.6 582.3L302.8 572.8L292.6 574.9L285.6 561.2L296.2 559.1Z" fill="url(#pdl)" fill-rule="evenodd"/>
<path d="M291.8 548.0L533.9 485.7L539.9 494.3L549.3 491.8L558.1 503.7L548.2 506.1L554.4 514.7L565.7 513.0L573.7 525.5L563.5 528.1L569.4 536.5L581.3 535.2L590.2 548.3L579.6 550.7L588.5 565.0L334.9 638.6L326.1 620.5L315.5 622.8L308.0 608.7L319.0 605.7L314.3 595.9L303.5 598.1L296.5 584.1L307.6 581.8L302.8 572.3L292.6 574.4L285.6 560.7L296.2 558.6Z" fill="url(#pdl)" fill-rule="evenodd"/>
<path d="M291.7 547.4L533.8 485.1L539.8 493.7L549.2 491.2L558.0 503.1L548.1 505.5L554.3 514.1L565.6 512.4L573.6 524.9L563.4 527.5L569.3 535.9L581.2 534.6L590.1 547.7L579.5 550.1L588.4 564.4L334.8 638.0L326.0 619.9L315.4 622.2L307.9 608.1L318.9 605.1L314.2 595.3L303.4 597.5L296.4 583.5L307.5 581.2L302.7 571.7L292.5 573.8L285.5 560.1L296.1 558.0Z" fill="url(#pdl)" fill-rule="evenodd"/>
<path d="M291.7 546.9L533.8 484.6L539.8 493.2L549.2 490.7L558.0 502.6L548.1 505.0L554.3 513.6L565.6 511.9L573.6 524.4L563.4 527.0L569.3 535.4L581.2 534.1L590.1 547.2L579.5 549.6L588.4 563.9L334.8 637.5L326.0 619.4L315.4 621.7L307.9 607.6L318.9 604.6L314.2 594.8L303.4 597.0L296.4 583.0L307.5 580.7L302.7 571.2L292.5 573.3L285.5 559.6L296.1 557.5Z" fill="url(#pdl)" fill-rule="evenodd"/>
<path d="M291.6 546.4L533.7 484.1L539.7 492.7L549.1 490.2L557.9 502.1L548.0 504.5L554.2 513.1L565.5 511.4L573.5 523.9L563.3 526.5L569.2 534.9L581.1 533.6L590.0 546.7L579.4 549.1L588.3 563.4L334.7 637.0L325.9 618.9L315.3 621.2L307.8 607.1L318.8 604.1L314.1 594.3L303.3 596.5L296.3 582.5L307.4 580.2L302.6 570.7L292.4 572.8L285.4 559.1L296.0 557.0Z" fill="url(#pdl)" fill-rule="evenodd"/>
<path d="M291.5 545.9L533.6 483.6L539.6 492.2L549.0 489.7L557.8 501.6L547.9 504.0L554.1 512.6L565.4 510.9L573.4 523.4L563.2 526.0L569.1 534.4L581.0 533.1L589.9 546.2L579.3 548.6L588.2 562.9L334.6 636.5L325.8 618.4L315.2 620.7L307.7 606.6L318.7 603.6L314.0 593.8L303.2 596.0L296.2 582.0L307.3 579.7L302.5 570.2L292.3 572.3L285.3 558.6L295.9 556.5Z" fill="url(#pdl)" fill-rule="evenodd"/>
<path d="M291.5 545.4L533.6 483.1L539.6 491.7L549.0 489.2L557.8 501.1L547.9 503.5L554.1 512.1L565.4 510.4L573.4 522.9L563.2 525.5L569.1 533.9L581.0 532.6L589.9 545.7L579.3 548.1L588.2 562.4L334.6 636.0L325.8 617.9L315.2 620.2L307.7 606.1L318.7 603.1L314.0 593.3L303.2 595.5L296.2 581.5L307.3 579.2L302.5 569.7L292.3 571.8L285.3 558.1L295.9 556.0Z" fill="url(#pdl)" fill-rule="evenodd"/>
<path d="M291.4 544.9L533.5 482.6L539.5 491.2L548.9 488.7L557.7 500.6L547.8 503.0L554.0 511.6L565.3 509.9L573.3 522.4L563.1 525.0L569.0 533.4L580.9 532.1L589.8 545.2L579.2 547.6L588.1 561.9L334.5 635.5L325.7 617.4L315.1 619.7L307.6 605.6L318.6 602.6L313.9 592.8L303.1 595.0L296.1 581.0L307.2 578.7L302.4 569.2L292.2 571.3L285.2 557.6L295.8 555.5Z" fill="url(#pdl)" fill-rule="evenodd"/>
<path d="M291.4 544.4L533.5 482.1L539.5 490.7L548.9 488.2L557.7 500.1L547.8 502.5L554.0 511.1L565.3 509.4L573.3 521.9L563.1 524.5L569.0 532.9L580.9 531.6L589.8 544.7L579.2 547.1L588.1 561.4L334.5 635.0L325.7 616.9L315.1 619.2L307.6 605.1L318.6 602.1L313.9 592.3L303.1 594.5L296.1 580.5L307.2 578.2L302.4 568.7L292.2 570.8L285.2 557.1L295.8 555.0Z" fill="url(#pdl)" fill-rule="evenodd"/>
<path d="M547.7 502.0L557.6 499.6L558.5 507.2L548.6 509.6Z" fill="url(#pdm)"/>
<path d="M563.0 524.0L573.2 521.4L574.1 529.0L563.9 531.6Z" fill="url(#pdm)"/>
<path d="M579.1 546.6L589.7 544.2L590.6 551.8L580.0 554.2Z" fill="url(#pdm)"/>
<path d="M292.1 570.3L302.3 568.2L303.2 575.8L293.0 577.9Z" fill="url(#pdm)"/>
<path d="M303.0 594.0L313.8 591.8L314.7 599.4L303.9 601.6Z" fill="url(#pdm)"/>
<path d="M315.0 618.7L325.6 616.4L326.5 624.0L315.9 626.3Z" fill="url(#pdm)"/>
<path d="M588.0 560.9L588.9 568.5" stroke="#111" stroke-width="1.65" fill="none"/>
<path d="M334.4 634.5L335.3 642.1" stroke="#111" stroke-width="1.65" fill="none"/>
<path d="M557.6 499.6L558.5 507.2" stroke="#111" stroke-width="1.65" fill="none"/>
<path d="M573.2 521.4L574.1 529.0" stroke="#111" stroke-width="1.65" fill="none"/>
<path d="M589.7 544.2L590.6 551.8" stroke="#111" stroke-width="1.65" fill="none"/>
<path d="M315.0 618.7L315.9 626.3" stroke="#111" stroke-width="1.65" fill="none"/>
<path d="M303.0 594.0L303.9 601.6" stroke="#111" stroke-width="1.65" fill="none"/>
<path d="M292.1 570.3L293.0 577.9" stroke="#111" stroke-width="1.65" fill="none"/>
<path d="M291.3 543.9L533.4 481.6L539.4 490.2L548.8 487.7L557.6 499.6L547.7 502.0L553.9 510.6L565.2 508.9L573.2 521.4L563.0 524.0L568.9 532.4L580.8 531.1L589.7 544.2L579.1 546.6L588.0 560.9L334.4 634.5L325.6 616.4L315.0 618.7L307.5 604.6L318.5 601.6L313.8 591.8L303.0 594.0L296.0 580.0L307.1 577.7L302.3 568.2L292.1 570.3L285.1 556.6L295.7 554.5Z" fill="url(#pw)" fill-rule="evenodd" stroke="#111" stroke-width="1.65" stroke-linejoin="round"/>
<path d="M656.7 334.4L676.1 329.5L677.2 325.1L703.6 319.4L706.9 322.3L777.3 305.1L778.4 301.4L804.7 295.4L807.4 298.1L874.0 281.6L875.1 277.6L900.4 272.3L903.7 275.0L967.2 259.2L968.3 255.2L992.5 250.1L995.8 253.0L1020.0 247.5L1121.8 320.7L1098.0 326.7L1101.3 331.1L1073.9 338.8L1070.6 334.4L1002.4 354.2L1003.5 358.1L974.9 365.2L971.6 360.3L897.1 378.4L900.4 385.0L871.8 392.6L867.4 387.1L790.5 406.9L793.7 412.4L764.1 420.1L759.7 414.6L736.6 420.8Z M701.4 358.6L1040.2 276.7L1091.0 313.9L742.1 402.1Z" fill="url(#pdm)" fill-rule="evenodd" stroke="#111" stroke-width="2.65" stroke-linejoin="round"/>
<path d="M656.7 334.4L676.1 329.5L677.2 325.1L703.6 319.4L706.9 322.3L777.3 305.1L778.4 301.4L804.7 295.4L807.4 298.1L874.0 281.6L875.1 277.6L900.4 272.3L903.7 275.0L967.2 259.2L968.3 255.2L992.5 250.1L995.8 253.0L1020.0 247.5L1121.8 320.7L1098.0 326.7L1101.3 331.1L1073.9 338.8L1070.6 334.4L1002.4 354.2L1003.5 358.1L974.9 365.2L971.6 360.3L897.1 378.4L900.4 385.0L871.8 392.6L867.4 387.1L790.5 406.9L793.7 412.4L764.1 420.1L759.7 414.6L736.6 420.8Z M701.4 358.6L1040.2 276.7L1091.0 313.9L742.1 402.1Z" fill="url(#pdm)" fill-rule="evenodd"/>
<path d="M656.7 333.9L676.1 329.0L677.2 324.6L703.6 318.9L706.9 321.8L777.3 304.6L778.4 300.9L804.7 294.9L807.4 297.6L874.0 281.1L875.1 277.1L900.4 271.8L903.7 274.5L967.2 258.7L968.3 254.7L992.5 249.6L995.8 252.5L1020.0 247.0L1121.8 320.2L1098.0 326.2L1101.3 330.6L1073.9 338.3L1070.6 333.9L1002.4 353.7L1003.5 357.6L974.9 364.7L971.6 359.8L897.1 377.9L900.4 384.5L871.8 392.1L867.4 386.6L790.5 406.4L793.7 411.9L764.1 419.6L759.7 414.1L736.6 420.3Z M701.4 358.1L1040.2 276.2L1091.0 313.4L742.1 401.6Z" fill="url(#pdm)" fill-rule="evenodd"/>
<path d="M656.6 333.4L676.0 328.5L677.1 324.1L703.5 318.4L706.8 321.3L777.2 304.1L778.3 300.4L804.6 294.4L807.3 297.1L873.9 280.6L875.0 276.6L900.3 271.3L903.6 274.0L967.1 258.2L968.2 254.2L992.4 249.1L995.7 252.0L1019.9 246.5L1121.7 319.7L1097.9 325.7L1101.2 330.1L1073.8 337.8L1070.5 333.4L1002.3 353.2L1003.4 357.1L974.8 364.2L971.5 359.3L897.0 377.4L900.3 384.0L871.7 391.6L867.3 386.1L790.4 405.9L793.6 411.4L764.0 419.1L759.6 413.6L736.5 419.8Z M701.3 357.6L1040.1 275.7L1090.9 312.9L742.0 401.1Z" fill="url(#pdm)" fill-rule="evenodd"/>
<path d="M656.5 332.9L675.9 328.0L677.0 323.6L703.4 317.9L706.7 320.8L777.1 303.6L778.2 299.9L804.5 293.9L807.2 296.6L873.8 280.1L874.9 276.1L900.2 270.8L903.5 273.5L967.0 257.7L968.1 253.7L992.3 248.6L995.6 251.5L1019.8 246.0L1121.6 319.2L1097.8 325.2L1101.1 329.6L1073.7 337.3L1070.4 332.9L1002.2 352.7L1003.3 356.6L974.7 363.7L971.4 358.8L896.9 376.9L900.2 383.5L871.6 391.1L867.2 385.6L790.3 405.4L793.5 410.9L763.9 418.6L759.5 413.1L736.4 419.3Z M701.2 357.1L1040.0 275.2L1090.8 312.4L741.9 400.6Z" fill="url(#pdm)" fill-rule="evenodd"/>
<path d="M656.5 332.4L675.9 327.5L677.0 323.1L703.4 317.4L706.7 320.3L777.1 303.1L778.2 299.4L804.5 293.4L807.2 296.1L873.8 279.6L874.9 275.6L900.2 270.3L903.5 273.0L967.0 257.2L968.1 253.2L992.3 248.1L995.6 251.0L1019.8 245.5L1121.6 318.7L1097.8 324.7L1101.1 329.1L1073.7 336.8L1070.4 332.4L1002.2 352.2L1003.3 356.1L974.7 363.2L971.4 358.3L896.9 376.4L900.2 383.0L871.6 390.6L867.2 385.1L790.3 404.9L793.5 410.4L763.9 418.1L759.5 412.6L736.4 418.8Z M701.2 356.6L1040.0 274.7L1090.8 311.9L741.9 400.1Z" fill="url(#pdm)" fill-rule="evenodd"/>
<path d="M656.4 331.9L675.8 327.0L676.9 322.6L703.3 316.9L706.6 319.8L777.0 302.6L778.1 298.9L804.4 292.9L807.1 295.6L873.7 279.1L874.8 275.1L900.1 269.8L903.4 272.5L966.9 256.7L968.0 252.7L992.2 247.6L995.5 250.5L1019.7 245.0L1121.5 318.2L1097.7 324.2L1101.0 328.6L1073.6 336.3L1070.3 331.9L1002.1 351.7L1003.2 355.6L974.6 362.7L971.3 357.8L896.8 375.9L900.1 382.5L871.5 390.1L867.1 384.6L790.2 404.4L793.4 409.9L763.8 417.6L759.4 412.1L736.3 418.3Z M701.1 356.1L1039.9 274.2L1090.7 311.4L741.8 399.6Z" fill="url(#pdm)" fill-rule="evenodd"/>
<path d="M656.3 331.4L675.7 326.5L676.8 322.1L703.2 316.4L706.5 319.3L776.9 302.1L778.0 298.4L804.3 292.4L807.0 295.1L873.6 278.6L874.7 274.6L900.0 269.3L903.3 272.0L966.8 256.2L967.9 252.2L992.1 247.1L995.4 250.0L1019.6 244.5L1121.4 317.7L1097.6 323.7L1100.9 328.1L1073.5 335.8L1070.2 331.4L1002.0 351.2L1003.1 355.1L974.5 362.2L971.2 357.3L896.7 375.4L900.0 382.0L871.4 389.6L867.0 384.1L790.1 403.9L793.3 409.4L763.7 417.1L759.3 411.6L736.2 417.8Z M701.0 355.6L1039.8 273.7L1090.6 310.9L741.7 399.1Z" fill="url(#pdm)" fill-rule="evenodd"/>
<path d="M656.3 330.9L675.7 326.0L676.8 321.6L703.2 315.9L706.5 318.8L776.9 301.6L778.0 297.9L804.3 291.9L807.0 294.6L873.6 278.1L874.7 274.1L900.0 268.8L903.3 271.5L966.8 255.7L967.9 251.7L992.1 246.6L995.4 249.5L1019.6 244.0L1121.4 317.2L1097.6 323.2L1100.9 327.6L1073.5 335.3L1070.2 330.9L1002.0 350.7L1003.1 354.6L974.5 361.7L971.2 356.8L896.7 374.9L900.0 381.5L871.4 389.1L867.0 383.6L790.1 403.4L793.3 408.9L763.7 416.6L759.3 411.1L736.2 417.3Z M701.0 355.1L1039.8 273.2L1090.6 310.4L741.7 398.6Z" fill="url(#pdm)" fill-rule="evenodd"/>
<path d="M656.2 330.3L675.6 325.4L676.7 321.0L703.1 315.3L706.4 318.2L776.8 301.0L777.9 297.3L804.2 291.3L806.9 294.0L873.5 277.5L874.6 273.5L899.9 268.2L903.2 270.9L966.7 255.1L967.8 251.1L992.0 246.0L995.3 248.9L1019.5 243.4L1121.3 316.6L1097.5 322.6L1100.8 327.0L1073.4 334.7L1070.1 330.3L1001.9 350.1L1003.0 354.0L974.4 361.1L971.1 356.2L896.6 374.3L899.9 380.9L871.3 388.5L866.9 383.0L790.0 402.8L793.2 408.3L763.6 416.0L759.2 410.5L736.1 416.7Z M700.9 354.5L1039.7 272.6L1090.5 309.8L741.6 398.0Z" fill="url(#pdm)" fill-rule="evenodd"/>
<path d="M656.2 329.8L675.6 324.9L676.7 320.5L703.1 314.8L706.4 317.7L776.8 300.5L777.9 296.8L804.2 290.8L806.9 293.5L873.5 277.0L874.6 273.0L899.9 267.7L903.2 270.4L966.7 254.6L967.8 250.6L992.0 245.5L995.3 248.4L1019.5 242.9L1121.3 316.1L1097.5 322.1L1100.8 326.5L1073.4 334.2L1070.1 329.8L1001.9 349.6L1003.0 353.5L974.4 360.6L971.1 355.7L896.6 373.8L899.9 380.4L871.3 388.0L866.9 382.5L790.0 402.3L793.2 407.8L763.6 415.5L759.2 410.0L736.1 416.2Z M700.9 354.0L1039.7 272.1L1090.5 309.3L741.6 397.5Z" fill="url(#pdm)" fill-rule="evenodd"/>
<path d="M656.1 329.3L675.5 324.4L676.6 320.0L703.0 314.3L706.3 317.2L776.7 300.0L777.8 296.3L804.1 290.3L806.8 293.0L873.4 276.5L874.5 272.5L899.8 267.2L903.1 269.9L966.6 254.1L967.7 250.1L991.9 245.0L995.2 247.9L1019.4 242.4L1121.2 315.6L1097.4 321.6L1100.7 326.0L1073.3 333.7L1070.0 329.3L1001.8 349.1L1002.9 353.0L974.3 360.1L971.0 355.2L896.5 373.3L899.8 379.9L871.2 387.5L866.8 382.0L789.9 401.8L793.1 407.3L763.5 415.0L759.1 409.5L736.0 415.7Z M700.8 353.5L1039.6 271.6L1090.4 308.8L741.5 397.0Z" fill="url(#pdm)" fill-rule="evenodd"/>
<path d="M656.0 328.8L675.4 323.9L676.5 319.5L702.9 313.8L706.2 316.7L776.6 299.5L777.7 295.8L804.0 289.8L806.7 292.5L873.3 276.0L874.4 272.0L899.7 266.7L903.0 269.4L966.5 253.6L967.6 249.6L991.8 244.5L995.1 247.4L1019.3 241.9L1121.1 315.1L1097.3 321.1L1100.6 325.5L1073.2 333.2L1069.9 328.8L1001.7 348.6L1002.8 352.5L974.2 359.6L970.9 354.7L896.4 372.8L899.7 379.4L871.1 387.0L866.7 381.5L789.8 401.3L793.0 406.8L763.4 414.5L759.0 409.0L735.9 415.2Z M700.7 353.0L1039.5 271.1L1090.3 308.3L741.4 396.5Z" fill="url(#pdm)" fill-rule="evenodd"/>
<path d="M656.0 328.3L675.4 323.4L676.5 319.0L702.9 313.3L706.2 316.2L776.6 299.0L777.7 295.3L804.0 289.3L806.7 292.0L873.3 275.5L874.4 271.5L899.7 266.2L903.0 268.9L966.5 253.1L967.6 249.1L991.8 244.0L995.1 246.9L1019.3 241.4L1121.1 314.6L1097.3 320.6L1100.6 325.0L1073.2 332.7L1069.9 328.3L1001.7 348.1L1002.8 352.0L974.2 359.1L970.9 354.2L896.4 372.3L899.7 378.9L871.1 386.5L866.7 381.0L789.8 400.8L793.0 406.3L763.4 414.0L759.0 408.5L735.9 414.7Z M700.7 352.5L1039.5 270.6L1090.3 307.8L741.4 396.0Z" fill="url(#pdm)" fill-rule="evenodd"/>
<path d="M655.9 327.8L675.3 322.9L676.4 318.5L702.8 312.8L706.1 315.7L776.5 298.5L777.6 294.8L803.9 288.8L806.6 291.5L873.2 275.0L874.3 271.0L899.6 265.7L902.9 268.4L966.4 252.6L967.5 248.6L991.7 243.5L995.0 246.4L1019.2 240.9L1121.0 314.1L1097.2 320.1L1100.5 324.5L1073.1 332.2L1069.8 327.8L1001.6 347.6L1002.7 351.5L974.1 358.6L970.8 353.7L896.3 371.8L899.6 378.4L871.0 386.0L866.6 380.5L789.7 400.3L792.9 405.8L763.3 413.5L758.9 408.0L735.8 414.2Z M700.6 352.0L1039.4 270.1L1090.2 307.3L741.3 395.5Z" fill="url(#pdm)" fill-rule="evenodd"/>
<path d="M655.9 327.3L675.3 322.4L676.4 318.0L702.8 312.3L706.1 315.2L776.5 298.0L777.6 294.3L803.9 288.3L806.6 291.0L873.2 274.5L874.3 270.5L899.6 265.2L902.9 267.9L966.4 252.1L967.5 248.1L991.7 243.0L995.0 245.9L1019.2 240.4L1121.0 313.6L1097.2 319.6L1100.5 324.0L1073.1 331.7L1069.8 327.3L1001.6 347.1L1002.7 351.0L974.1 358.1L970.8 353.2L896.3 371.3L899.6 377.9L871.0 385.5L866.6 380.0L789.7 399.8L792.9 405.3L763.3 413.0L758.9 407.5L735.8 413.7Z M700.6 351.5L1039.4 269.6L1090.2 306.8L741.3 395.0Z" fill="url(#pdm)" fill-rule="evenodd"/>
<path d="M1073.0 331.2L1100.4 323.5L1101.3 331.1L1073.9 338.8Z" fill="url(#pd)"/>
<path d="M974.0 357.6L1002.6 350.5L1003.5 358.1L974.9 365.2Z" fill="url(#pd)"/>
<path d="M870.9 385.0L899.5 377.4L900.4 385.0L871.8 392.6Z" fill="url(#pd)"/>
<path d="M763.2 412.5L792.8 404.8L793.7 412.4L764.1 420.1Z" fill="url(#pd)"/>
<path d="M1120.9 313.1L1121.8 320.7" stroke="#111" stroke-width="1.65" fill="none"/>
<path d="M735.7 413.2L736.6 420.8" stroke="#111" stroke-width="1.65" fill="none"/>
<path d="M1100.4 323.5L1101.3 331.1" stroke="#111" stroke-width="1.65" fill="none"/>
<path d="M1073.0 331.2L1073.9 338.8" stroke="#111" stroke-width="1.65" fill="none"/>
<path d="M1002.6 350.5L1003.5 358.1" stroke="#111" stroke-width="1.65" fill="none"/>
<path d="M974.0 357.6L974.9 365.2" stroke="#111" stroke-width="1.65" fill="none"/>
<path d="M899.5 377.4L900.4 385.0" stroke="#111" stroke-width="1.65" fill="none"/>
<path d="M870.9 385.0L871.8 392.6" stroke="#111" stroke-width="1.65" fill="none"/>
<path d="M792.8 404.8L793.7 412.4" stroke="#111" stroke-width="1.65" fill="none"/>
<path d="M763.2 412.5L764.1 420.1" stroke="#111" stroke-width="1.65" fill="none"/>
<path d="M700.5 351.0L701.4 358.6" stroke="#111" stroke-width="1.65" fill="none"/>
<path d="M1039.3 269.1L1040.2 276.7" stroke="#111" stroke-width="1.65" fill="none"/>
<path d="M655.8 326.8L675.2 321.9L676.3 317.5L702.7 311.8L706.0 314.7L776.4 297.5L777.5 293.8L803.8 287.8L806.5 290.5L873.1 274.0L874.2 270.0L899.5 264.7L902.8 267.4L966.3 251.6L967.4 247.6L991.6 242.5L994.9 245.4L1019.1 239.9L1120.9 313.1L1097.1 319.1L1100.4 323.5L1073.0 331.2L1069.7 326.8L1001.5 346.6L1002.6 350.5L974.0 357.6L970.7 352.7L896.2 370.8L899.5 377.4L870.9 385.0L866.5 379.5L789.6 399.3L792.8 404.8L763.2 412.5L758.8 407.0L735.7 413.2Z M700.5 351.0L1039.3 269.1L1090.1 306.3L741.2 394.5Z" fill="url(#pw)" fill-rule="evenodd" stroke="#111" stroke-width="1.65" stroke-linejoin="round"/>
<path d="M564.9 481.4L601.0 470.5L628.8 464.2L655.4 461.9L656.4 466.1L689.4 463.3L690.2 458.5L778.9 450.9L780.4 455.4L813.0 452.8L812.5 448.1L901.6 440.5L902.7 445.0L935.0 442.4L935.0 437.6L1022.3 430.2L1023.4 434.7L1056.4 431.9L1055.3 427.4L1089.3 424.5L1093.3 427.6L622.1 559.5Z" fill="url(#pdl)" fill-rule="evenodd" stroke="#111" stroke-width="2.65" stroke-linejoin="round"/>
<path d="M564.9 481.4L601.0 470.5L628.8 464.2L655.4 461.9L656.4 466.1L689.4 463.3L690.2 458.5L778.9 450.9L780.4 455.4L813.0 452.8L812.5 448.1L901.6 440.5L902.7 445.0L935.0 442.4L935.0 437.6L1022.3 430.2L1023.4 434.7L1056.4 431.9L1055.3 427.4L1089.3 424.5L1093.3 427.6L622.1 559.5Z" fill="url(#pdl)" fill-rule="evenodd"/>
<path d="M564.8 480.9L600.9 470.0L628.7 463.7L655.3 461.4L656.3 465.6L689.3 462.8L690.1 458.0L778.8 450.4L780.3 454.9L812.9 452.3L812.4 447.6L901.5 440.0L902.6 444.5L934.9 441.9L934.9 437.1L1022.2 429.7L1023.3 434.2L1056.3 431.4L1055.2 426.9L1089.2 424.0L1093.2 427.1L622.0 559.0Z" fill="url(#pdl)" fill-rule="evenodd"/>
<path d="M564.7 480.4L600.8 469.5L628.6 463.2L655.2 460.9L656.2 465.1L689.2 462.3L690.0 457.5L778.7 449.9L780.2 454.4L812.8 451.8L812.3 447.1L901.4 439.5L902.5 444.0L934.8 441.4L934.8 436.6L1022.1 429.2L1023.2 433.7L1056.2 430.9L1055.1 426.4L1089.1 423.5L1093.1 426.6L621.9 558.5Z" fill="url(#pdl)" fill-rule="evenodd"/>
<path d="M564.7 479.9L600.8 469.0L628.6 462.7L655.2 460.4L656.2 464.6L689.2 461.8L690.0 457.0L778.7 449.4L780.2 453.9L812.8 451.3L812.3 446.6L901.4 439.0L902.5 443.5L934.8 440.9L934.8 436.1L1022.1 428.7L1023.2 433.2L1056.2 430.4L1055.1 425.9L1089.1 423.0L1093.1 426.1L621.9 558.0Z" fill="url(#pdl)" fill-rule="evenodd"/>
<path d="M564.6 479.4L600.7 468.5L628.5 462.2L655.1 459.9L656.1 464.1L689.1 461.3L689.9 456.5L778.6 448.9L780.1 453.4L812.7 450.8L812.2 446.1L901.3 438.5L902.4 443.0L934.7 440.4L934.7 435.6L1022.0 428.2L1023.1 432.7L1056.1 429.9L1055.0 425.4L1089.0 422.5L1093.0 425.6L621.8 557.5Z" fill="url(#pdl)" fill-rule="evenodd"/>
<path d="M564.6 478.9L600.7 468.0L628.5 461.7L655.1 459.4L656.1 463.6L689.1 460.8L689.9 456.0L778.6 448.4L780.1 452.9L812.7 450.3L812.2 445.6L901.3 438.0L902.4 442.5L934.7 439.9L934.7 435.1L1022.0 427.7L1023.1 432.2L1056.1 429.4L1055.0 424.9L1089.0 422.0L1093.0 425.1L621.8 557.0Z" fill="url(#pdl)" fill-rule="evenodd"/>
<path d="M564.5 478.4L600.6 467.5L628.4 461.2L655.0 458.9L656.0 463.1L689.0 460.3L689.8 455.5L778.5 447.9L780.0 452.4L812.6 449.8L812.1 445.1L901.2 437.5L902.3 442.0L934.6 439.4L934.6 434.6L1021.9 427.2L1023.0 431.7L1056.0 428.9L1054.9 424.4L1088.9 421.5L1092.9 424.6L621.7 556.5Z" fill="url(#pdl)" fill-rule="evenodd"/>
<path d="M564.4 477.9L600.5 467.0L628.3 460.7L654.9 458.4L655.9 462.6L688.9 459.8L689.7 455.0L778.4 447.4L779.9 451.9L812.5 449.3L812.0 444.6L901.1 437.0L902.2 441.5L934.5 438.9L934.5 434.1L1021.8 426.7L1022.9 431.2L1055.9 428.4L1054.8 423.9L1088.8 421.0L1092.8 424.1L621.6 556.0Z" fill="url(#pdl)" fill-rule="evenodd"/>
<path d="M564.4 477.4L600.5 466.5L628.3 460.2L654.9 457.9L655.9 462.1L688.9 459.3L689.7 454.5L778.4 446.9L779.9 451.4L812.5 448.8L812.0 444.1L901.1 436.5L902.2 441.0L934.5 438.4L934.5 433.6L1021.8 426.2L1022.9 430.7L1055.9 427.9L1054.8 423.4L1088.8 420.5L1092.8 423.6L621.6 555.5Z" fill="url(#pdl)" fill-rule="evenodd"/>
<path d="M564.3 476.9L600.4 466.0L628.2 459.7L654.8 457.4L655.8 461.6L688.8 458.8L689.6 454.0L778.3 446.4L779.8 450.9L812.4 448.3L811.9 443.6L901.0 436.0L902.1 440.5L934.4 437.9L934.4 433.1L1021.7 425.7L1022.8 430.2L1055.8 427.4L1054.7 422.9L1088.7 420.0L1092.7 423.1L621.5 555.0Z" fill="url(#pdl)" fill-rule="evenodd"/>
<path d="M564.3 476.4L600.4 465.5L628.2 459.2L654.8 456.9L655.8 461.1L688.8 458.3L689.6 453.5L778.3 445.9L779.8 450.4L812.4 447.8L811.9 443.1L901.0 435.5L902.1 440.0L934.4 437.4L934.4 432.6L1021.7 425.2L1022.8 429.7L1055.8 426.9L1054.7 422.4L1088.7 419.5L1092.7 422.6L621.5 554.5Z" fill="url(#pdl)" fill-rule="evenodd"/>
<path d="M564.2 475.9L600.3 465.0L628.1 458.7L654.7 456.4L655.7 460.6L688.7 457.8L689.5 453.0L778.2 445.4L779.7 449.9L812.3 447.3L811.8 442.6L900.9 435.0L902.0 439.5L934.3 436.9L934.3 432.1L1021.6 424.7L1022.7 429.2L1055.7 426.4L1054.6 421.9L1088.6 419.0L1092.6 422.1L621.4 554.0Z" fill="url(#pdl)" fill-rule="evenodd"/>
<path d="M564.1 475.4L600.2 464.5L628.0 458.2L654.6 455.9L655.6 460.1L688.6 457.3L689.4 452.5L778.1 444.9L779.6 449.4L812.2 446.8L811.7 442.1L900.8 434.5L901.9 439.0L934.2 436.4L934.2 431.6L1021.5 424.2L1022.6 428.7L1055.6 425.9L1054.5 421.4L1088.5 418.5L1092.5 421.6L621.3 553.5Z" fill="url(#pdl)" fill-rule="evenodd"/>
<path d="M564.1 474.9L600.2 464.0L628.0 457.7L654.6 455.4L655.6 459.6L688.6 456.8L689.4 452.0L778.1 444.4L779.6 448.9L812.2 446.3L811.7 441.6L900.8 434.0L901.9 438.5L934.2 435.9L934.2 431.1L1021.5 423.7L1022.6 428.2L1055.6 425.4L1054.5 420.9L1088.5 418.0L1092.5 421.1L621.3 553.0Z" fill="url(#pdl)" fill-rule="evenodd"/>
<path d="M564.0 474.4L600.1 463.5L627.9 457.2L654.5 454.9L655.5 459.1L688.5 456.3L689.3 451.5L778.0 443.9L779.5 448.4L812.1 445.8L811.6 441.1L900.7 433.5L901.8 438.0L934.1 435.4L934.1 430.6L1021.4 423.2L1022.5 427.7L1055.5 424.9L1054.4 420.4L1088.4 417.5L1092.4 420.6L621.2 552.5Z" fill="url(#pdl)" fill-rule="evenodd"/>
<path d="M564.0 473.9L600.1 463.0L627.9 456.7L654.5 454.4L655.5 458.6L688.5 455.8L689.3 451.0L778.0 443.4L779.5 447.9L812.1 445.3L811.6 440.6L900.7 433.0L901.8 437.5L934.1 434.9L934.1 430.1L1021.4 422.7L1022.5 427.2L1055.5 424.4L1054.4 419.9L1088.4 417.0L1092.4 420.1L621.2 552.0Z" fill="url(#pdl)" fill-rule="evenodd"/>
<path d="M621.1 551.5L622.1 559.5" stroke="#111" stroke-width="1.65" fill="none"/>
<path d="M1092.3 419.6L1093.3 427.6" stroke="#111" stroke-width="1.65" fill="none"/>
<path d="M563.9 473.4L600.0 462.5L627.8 456.2L654.4 453.9L655.4 458.1L688.4 455.3L689.2 450.5L777.9 442.9L779.4 447.4L812.0 444.8L811.5 440.1L900.6 432.5L901.7 437.0L934.0 434.4L934.0 429.6L1021.3 422.2L1022.4 426.7L1055.4 423.9L1054.3 419.4L1088.3 416.5L1092.3 419.6L621.1 551.5Z" fill="url(#pw)" fill-rule="evenodd" stroke="#111" stroke-width="1.65" stroke-linejoin="round"/>
<path d="M580.1 479.1L590.6 476.8L598.2 488.6L588.7 491.1Z" fill="#8a7960" stroke="#111" stroke-width="1.3" stroke-linejoin="round"/>
<path d="M590.6 476.8L598.2 488.6L595.4 489.4L587.5 477.5Z" fill="#a39274"/>
<path d="M586.9 485.6L591.8 484.4L595.2 489.4L590.4 490.7Z" fill="#fff"/>
<path d="M580.1 479.1L590.6 476.8L598.2 488.6L588.7 491.1Z" fill="none" stroke="#111" stroke-width="1.3" stroke-linejoin="round"/>
<path d="M595.9 500.1L606.4 497.8L614.4 510.0L604.3 512.8Z" fill="#8a7960" stroke="#111" stroke-width="1.3" stroke-linejoin="round"/>
<path d="M606.4 497.8L614.4 510.0L611.4 510.8L603.2 498.5Z" fill="#a39274"/>
<path d="M602.6 507.0L607.8 505.7L611.2 510.9L606.1 512.3Z" fill="#fff"/>
<path d="M595.9 500.1L606.4 497.8L614.4 510.0L604.3 512.8Z" fill="none" stroke="#111" stroke-width="1.3" stroke-linejoin="round"/>
<path d="M611.6 521.6L622.4 519.1L631.2 531.5L620.1 534.8Z" fill="#8a7960" stroke="#111" stroke-width="1.3" stroke-linejoin="round"/>
<path d="M622.4 519.1L631.2 531.5L627.9 532.5L619.2 519.9Z" fill="#a39274"/>
<path d="M618.5 528.7L624.0 527.2L627.6 532.6L622.1 534.2Z" fill="#fff"/>
<path d="M611.6 521.6L622.4 519.1L631.2 531.5L620.1 534.8Z" fill="none" stroke="#111" stroke-width="1.3" stroke-linejoin="round"/>
<path d="M710.7 443.1L1136.6 331.5L1220.9 392.0L1166.3 406.9L1139.9 409.5L1138.8 405.6L1108.0 407.3L1108.7 412.8L1022.3 420.5L1020.7 415.0L989.3 417.9L989.9 424.5L902.0 431.0L900.9 425.5L869.7 427.7L869.0 433.2L782.2 440.9L781.1 436.5L749.2 438.7L748.1 444.6Z" fill="url(#pd)" fill-rule="evenodd" stroke="#111" stroke-width="2.65" stroke-linejoin="round"/>
<path d="M710.7 443.1L1136.6 331.5L1220.9 392.0L1166.3 406.9L1139.9 409.5L1138.8 405.6L1108.0 407.3L1108.7 412.8L1022.3 420.5L1020.7 415.0L989.3 417.9L989.9 424.5L902.0 431.0L900.9 425.5L869.7 427.7L869.0 433.2L782.2 440.9L781.1 436.5L749.2 438.7L748.1 444.6Z" fill="url(#pd)" fill-rule="evenodd"/>
<path d="M710.6 442.6L1136.5 331.0L1220.8 391.5L1166.2 406.4L1139.8 409.0L1138.7 405.1L1107.9 406.8L1108.6 412.3L1022.2 420.0L1020.6 414.5L989.2 417.4L989.8 424.0L901.9 430.5L900.8 425.0L869.6 427.2L868.9 432.7L782.1 440.4L781.0 436.0L749.1 438.2L748.0 444.1Z" fill="url(#pd)" fill-rule="evenodd"/>
<path d="M710.5 442.1L1136.4 330.5L1220.7 391.0L1166.1 405.9L1139.7 408.5L1138.6 404.6L1107.8 406.3L1108.5 411.8L1022.1 419.5L1020.5 414.0L989.1 416.9L989.7 423.5L901.8 430.0L900.7 424.5L869.5 426.7L868.8 432.2L782.0 439.9L780.9 435.5L749.0 437.7L747.9 443.6Z" fill="url(#pd)" fill-rule="evenodd"/>
<path d="M710.5 441.6L1136.4 330.0L1220.7 390.5L1166.1 405.4L1139.7 408.0L1138.6 404.1L1107.8 405.8L1108.5 411.3L1022.1 419.0L1020.5 413.5L989.1 416.4L989.7 423.0L901.8 429.5L900.7 424.0L869.5 426.2L868.8 431.7L782.0 439.4L780.9 435.0L749.0 437.2L747.9 443.1Z" fill="url(#pd)" fill-rule="evenodd"/>
<path d="M710.4 441.1L1136.3 329.5L1220.6 390.0L1166.0 404.9L1139.6 407.5L1138.5 403.6L1107.7 405.3L1108.4 410.8L1022.0 418.5L1020.4 413.0L989.0 415.9L989.6 422.5L901.7 429.0L900.6 423.5L869.4 425.7L868.7 431.2L781.9 438.9L780.8 434.5L748.9 436.7L747.8 442.6Z" fill="url(#pd)" fill-rule="evenodd"/>
<path d="M710.4 440.6L1136.3 329.0L1220.6 389.5L1166.0 404.4L1139.6 407.0L1138.5 403.1L1107.7 404.8L1108.4 410.3L1022.0 418.0L1020.4 412.5L989.0 415.4L989.6 422.0L901.7 428.5L900.6 423.0L869.4 425.2L868.7 430.7L781.9 438.4L780.8 434.0L748.9 436.2L747.8 442.1Z" fill="url(#pd)" fill-rule="evenodd"/>
<path d="M710.3 440.1L1136.2 328.5L1220.5 389.0L1165.9 403.9L1139.5 406.5L1138.4 402.6L1107.6 404.3L1108.3 409.8L1021.9 417.5L1020.3 412.0L988.9 414.9L989.5 421.5L901.6 428.0L900.5 422.5L869.3 424.7L868.6 430.2L781.8 437.9L780.7 433.5L748.8 435.7L747.7 441.6Z" fill="url(#pd)" fill-rule="evenodd"/>
<path d="M710.2 439.6L1136.1 328.0L1220.4 388.5L1165.8 403.4L1139.4 406.0L1138.3 402.1L1107.5 403.8L1108.2 409.3L1021.8 417.0L1020.2 411.5L988.8 414.4L989.4 421.0L901.5 427.5L900.4 422.0L869.2 424.2L868.5 429.7L781.7 437.4L780.6 433.0L748.7 435.2L747.6 441.1Z" fill="url(#pd)" fill-rule="evenodd"/>
<path d="M710.2 439.1L1136.1 327.5L1220.4 388.0L1165.8 402.9L1139.4 405.5L1138.3 401.6L1107.5 403.3L1108.2 408.8L1021.8 416.5L1020.2 411.0L988.8 413.9L989.4 420.5L901.5 427.0L900.4 421.5L869.2 423.7L868.5 429.2L781.7 436.9L780.6 432.5L748.7 434.7L747.6 440.6Z" fill="url(#pd)" fill-rule="evenodd"/>
<path d="M710.1 438.6L1136.0 327.0L1220.3 387.5L1165.7 402.4L1139.3 405.0L1138.2 401.1L1107.4 402.8L1108.1 408.3L1021.7 416.0L1020.1 410.5L988.7 413.4L989.3 420.0L901.4 426.5L900.3 421.0L869.1 423.2L868.4 428.7L781.6 436.4L780.5 432.0L748.6 434.2L747.5 440.1Z" fill="url(#pd)" fill-rule="evenodd"/>
<path d="M710.1 438.1L1136.0 326.5L1220.3 387.0L1165.7 401.9L1139.3 404.5L1138.2 400.6L1107.4 402.3L1108.1 407.8L1021.7 415.5L1020.1 410.0L988.7 412.9L989.3 419.5L901.4 426.0L900.3 420.5L869.1 422.7L868.4 428.2L781.6 435.9L780.5 431.5L748.6 433.7L747.5 439.6Z" fill="url(#pd)" fill-rule="evenodd"/>
<path d="M710.0 437.6L1135.9 326.0L1220.2 386.5L1165.6 401.4L1139.2 404.0L1138.1 400.1L1107.3 401.8L1108.0 407.3L1021.6 415.0L1020.0 409.5L988.6 412.4L989.2 419.0L901.3 425.5L900.2 420.0L869.0 422.2L868.3 427.7L781.5 435.4L780.4 431.0L748.5 433.2L747.4 439.1Z" fill="url(#pd)" fill-rule="evenodd"/>
<path d="M709.9 437.1L1135.8 325.5L1220.1 386.0L1165.5 400.9L1139.1 403.5L1138.0 399.6L1107.2 401.3L1107.9 406.8L1021.5 414.5L1019.9 409.0L988.5 411.9L989.1 418.5L901.2 425.0L900.1 419.5L868.9 421.7L868.2 427.2L781.4 434.9L780.3 430.5L748.4 432.7L747.3 438.6Z" fill="url(#pd)" fill-rule="evenodd"/>
<path d="M709.9 436.6L1135.8 325.0L1220.1 385.5L1165.5 400.4L1139.1 403.0L1138.0 399.1L1107.2 400.8L1107.9 406.3L1021.5 414.0L1019.9 408.5L988.5 411.4L989.1 418.0L901.2 424.5L900.1 419.0L868.9 421.2L868.2 426.7L781.4 434.4L780.3 430.0L748.4 432.2L747.3 438.1Z" fill="url(#pd)" fill-rule="evenodd"/>
<path d="M709.8 436.1L1135.7 324.5L1220.0 385.0L1165.4 399.9L1139.0 402.5L1137.9 398.6L1107.1 400.3L1107.8 405.8L1021.4 413.5L1019.8 408.0L988.4 410.9L989.0 417.5L901.1 424.0L900.0 418.5L868.8 420.7L868.1 426.2L781.3 433.9L780.2 429.5L748.3 431.7L747.2 437.6Z" fill="url(#pd)" fill-rule="evenodd"/>
<path d="M709.8 435.6L1135.7 324.0L1220.0 384.5L1165.4 399.4L1139.0 402.0L1137.9 398.1L1107.1 399.8L1107.8 405.3L1021.4 413.0L1019.8 407.5L988.4 410.4L989.0 417.0L901.1 423.5L900.0 418.0L868.8 420.2L868.1 425.7L781.3 433.4L780.2 429.0L748.3 431.2L747.2 437.1Z" fill="url(#pd)" fill-rule="evenodd"/>
<path d="M1165.3 398.9L1219.9 384.0L1220.9 392.0L1166.3 406.9Z" fill="url(#pdl)"/>
<path d="M1219.9 384.0L1220.9 392.0" stroke="#111" stroke-width="1.65" fill="none"/>
<path d="M1165.3 398.9L1166.3 406.9" stroke="#111" stroke-width="1.65" fill="none"/>
<path d="M1138.9 401.5L1139.9 409.5" stroke="#111" stroke-width="1.65" fill="none"/>
<path d="M1107.7 404.8L1108.7 412.8" stroke="#111" stroke-width="1.65" fill="none"/>
<path d="M1021.3 412.5L1022.3 420.5" stroke="#111" stroke-width="1.65" fill="none"/>
<path d="M988.9 416.5L989.9 424.5" stroke="#111" stroke-width="1.65" fill="none"/>
<path d="M901.0 423.0L902.0 431.0" stroke="#111" stroke-width="1.65" fill="none"/>
<path d="M868.0 425.2L869.0 433.2" stroke="#111" stroke-width="1.65" fill="none"/>
<path d="M781.2 432.9L782.2 440.9" stroke="#111" stroke-width="1.65" fill="none"/>
<path d="M747.1 436.6L748.1 444.6" stroke="#111" stroke-width="1.65" fill="none"/>
<path d="M709.7 435.1L710.7 443.1" stroke="#111" stroke-width="1.65" fill="none"/>
<path d="M709.7 435.1L1135.6 323.5L1219.9 384.0L1165.3 398.9L1138.9 401.5L1137.8 397.6L1107.0 399.3L1107.7 404.8L1021.3 412.5L1019.7 407.0L988.3 409.9L988.9 416.5L901.0 423.0L899.9 417.5L868.7 419.7L868.0 425.2L781.2 432.9L780.1 428.5L748.2 430.7L747.1 436.6Z" fill="url(#pw)" fill-rule="evenodd" stroke="#111" stroke-width="1.65" stroke-linejoin="round"/>
<path d="M1133.4 336.7L1141.6 334.5L1154.3 343.9L1146.6 346.1Z" fill="#8a7960" stroke="#111" stroke-width="1.3" stroke-linejoin="round"/>
<path d="M1141.6 334.5L1154.3 343.9L1152.0 344.6L1139.1 335.2Z" fill="#a39274"/>
<path d="M1133.4 336.7L1141.6 334.5L1154.3 343.9L1146.6 346.1Z" fill="none" stroke="#111" stroke-width="1.3" stroke-linejoin="round"/>
<path d="M1157.2 353.2L1165.3 351.0L1177.4 360.9L1170.2 363.5Z" fill="#8a7960" stroke="#111" stroke-width="1.3" stroke-linejoin="round"/>
<path d="M1165.3 351.0L1177.4 360.9L1175.2 361.7L1162.9 351.7Z" fill="#a39274"/>
<path d="M1157.2 353.2L1165.3 351.0L1177.4 360.9L1170.2 363.5Z" fill="none" stroke="#111" stroke-width="1.3" stroke-linejoin="round"/>
<path d="M1180.7 370.7L1188.4 368.1L1201.6 378.4L1193.9 380.9Z" fill="#8a7960" stroke="#111" stroke-width="1.3" stroke-linejoin="round"/>
<path d="M1188.4 368.1L1201.6 378.4L1199.3 379.1L1186.1 368.9Z" fill="#a39274"/>
<path d="M1180.7 370.7L1188.4 368.1L1201.6 378.4L1193.9 380.9Z" fill="none" stroke="#111" stroke-width="1.3" stroke-linejoin="round"/>
<path d="M1189.4 948.0L1189.4 925.0L1694.2 565.0L1762.6 557.0L1727.9 735.7Z" fill="url(#pmr)" stroke="#111" stroke-width="1.65" stroke-linejoin="round"/>
<path d="M1737.9 586.1L1747.8 583.6L1742.1 612.3L1732.9 616.0Z" fill="#d8c59c" fill-opacity=".35" stroke="#111" stroke-width="1.4" stroke-linejoin="round"/>
<path d="M1729.1 637.2L1737.9 634.7L1731.6 663.4L1722.9 666.6Z" fill="#d8c59c" fill-opacity=".35" stroke="#111" stroke-width="1.4" stroke-linejoin="round"/>
<path d="M1719.2 687.1L1727.9 684.6L1721.7 713.2L1712.9 715.7Z" fill="#d8c59c" fill-opacity=".35" stroke="#111" stroke-width="1.4" stroke-linejoin="round"/>
<path d="M1528.2 429.3L1733.0 558.0L1687.0 576.0L1522.6 471.0Z" fill="url(#gback)"/>
<path d="M1479.0 443.0L1528.2 429.3L1523.5 471.0Z" fill="url(#gleft)"/>
<path d="M1528.2 429.3L1522.6 469.3" stroke="#111" stroke-width="1.1"/>
<path d="M1024.9 752.1L1181.5 931.3L1182.1 941.5L1022.0 761.8Z" fill="#dcc79b" stroke="#111" stroke-width="1"/>
<path d="M1015.5 747.7L1024.9 752.1L1022.0 761.8L1016.1 757.1Z" fill="#d5c095" stroke="#111" stroke-width="1.4" stroke-linejoin="round"/>
<path d="M1181.5 931.3L1189.4 937.1L1189.4 948.0L1182.1 941.5Z" fill="#e6d2a6" stroke="#111" stroke-width="1.4" stroke-linejoin="round"/>
<path d="M1015.5 747.7L1473.8 437.6L1480.8 442.4L1687.0 574.1L1694.2 581.1L1666.8 601.1L1668.1 609.8L1634.4 634.2L1631.9 626.0L1536.0 693.3L1539.2 702.0L1503.6 726.9L1501.1 719.5L1403.5 786.1L1406.5 795.5L1369.8 820.7L1366.9 811.9L1267.2 883.5L1270.1 893.1L1232.6 918.1L1229.0 909.3L1189.4 937.1L1181.5 931.3L1024.9 752.1Z" fill="url(#pwr)" stroke="#111" stroke-width="1.65" stroke-linejoin="round"/>
<path d="M1065.1 760.9L1489.2 473.8L1586.1 539.3L1143.7 845.9Z" fill="#979184" stroke="#111" stroke-width="1.5" stroke-linejoin="round"/>
<path d="M1107.9 731.9L1496.6 601.3L1143.7 845.9L1065.1 760.9Z" fill="#a09a8e"/>
<path d="M1065.1 760.9L1489.2 473.8L1490.6 480.8L1072.7 766.7Z" fill="#8e897d"/>
<path d="M1489.2 473.8L1586.1 539.3L1578.3 542.1L1490.6 480.8Z" fill="#8e897d"/>
<path d="M1072.7 766.7L1490.6 480.800L1578.3 542.100M1489.2 473.800L1490.6 480.800" fill="none" stroke="#111" stroke-width="1"/>
<path d="M1085 772L1489.5 497L1566 547" fill="none" stroke="#a39d91" stroke-width="1"/>
<path d="M1065.1 760.9L1489.2 473.8L1586.1 539.3L1143.7 845.9Z" fill="none" stroke="#111" stroke-width="1.5" stroke-linejoin="round"/>
<path d="M1473.8 437.6L1536.5 418.9L1544.3 423.7L1528.2 429.3L1480.8 442.4Z" fill="url(#pwr)" stroke="#111" stroke-width="1.65" stroke-linejoin="round"/>
<path d="M1544.3 423.7L1742.4 554.1L1732.2 557.7L1528.2 429.3Z" fill="url(#pwr)" stroke="#111" stroke-width="1.65" stroke-linejoin="round"/>
<path d="M1687.0 574.1L1752.7 550.5L1762.6 557.0L1694.2 581.1Z" fill="url(#pwr)" stroke="#111" stroke-width="1.65" stroke-linejoin="round"/>
<path d="M1181.5 931.3L1221.7 902.8L1229 909.3 M1267.2 883.5L1259.8 876.4L1359.5 806L1366.9 811.9 M1403.5 786.1L1396.2 778.8L1493 711.3L1501.1 719.5 M1536 693.3L1529.7 687.1L1623.2 619.8L1631.9 626 M1666.8 601.1L1658.8 593.6L1685.5 576.1L1694.2 581.1 M1052.8 724.2L1057.2 729.5L1024.9 752.1 M1088 700.2L1092.4 706L1183.3 645L1177.4 639.2 M1209.7 616.3L1217 621.6L1305.3 562L1298.6 557.1 M1331 533.4L1337.2 539.1L1423.9 481.8L1417 477.3 M1448.9 454.9L1454.9 459.4L1480.8 442.4" fill="none" stroke="#111" stroke-width="1.4" stroke-linejoin="round"/>
<g stroke-linejoin="round">
<path d="M1817.900 176L1860 166.300L1884.200 183.200L1837.200 195.900Z" fill="#e9e9e9"/>
<path d="M1817.900 176L1837.200 195.900L1840.400 239.100L1821.900 213.700Z" fill="#dcdcdc"/>
<path d="M1837.200 195.900L1884.200 183.200L1882.900 225.100L1840.400 239.100Z" fill="#dedede"/>
<path d="M1817.900 176L1860 166.300L1884.200 183.200M1837.200 195.900L1884.200 183.200M1817.900 176L1837.200 195.900L1840.400 239.100M1817.900 176L1821.900 213.700L1840.400 239.100" fill="none" stroke="#8a8a8a" stroke-width="1" stroke-dasharray="5 3"/>
<rect x="1834" y="191" width="12" height="12" fill="#cfd2d6" opacity=".7" transform="skewY(-12) translate(0 390)"/>
<path d="M1883.600 225.100L1885.500 176.800" stroke="#6fe66f" stroke-width="2.400"/><path d="M1883.600 225.600L1833.400 244.200" stroke="#f47a7a" stroke-width="2.400"/>
<text x="1886" y="173" font-family="Liberation Sans" font-size="12.500" fill="#6fe66f" text-anchor="middle" transform="translate(0 0)">Y</text>
<text x="1825.700" y="250.500" font-family="Liberation Sans" font-size="12.500" fill="#f47a7a" text-anchor="middle">X</text>
<text font-family="Liberation Sans" font-size="10.200" font-weight="bold" fill="#9a9ea6" transform="matrix(0.96 -0.29 0.02 1 1841.500 222.500)">BOTTOM</text>
<text font-family="Liberation Sans" font-size="10" font-weight="bold" fill="#a4a8ae" transform="matrix(0.905 -0.219 -0.32 0.70 1837.400 184.800)">BACK</text>
<text font-family="Liberation Sans" font-size="7" font-weight="bold" fill="#b0b3b8" transform="matrix(0.12 -0.98 0.55 0.75 1830.500 222)">FRONT</text>
</g>
</svg>

<!-- BROWSER -->
<div class="panel" style="top:141px;height:26px"></div><div class="ptxt" style="top:146px">BROWSER</div>
<svg style="left:0;top:141px" width="298" height="26" viewBox="0 141 298 26"><path d="M3 153.700L8 150.600V156.800ZM8.300 153.700L13.300 150.600V156.800Z" fill="#333"/><circle cx="281.500" cy="153.500" r="4.700" fill="#222"/><rect x="278.800" y="152.800" width="5.400" height="1.500" fill="#fff"/></svg>
<div class="abs" style="left:34px;top:171px;width:217px;height:20px;background:#f0f0f0"></div><div class="abs" style="left:59px;top:173px;width:142px;height:16px;background:#969696"></div><div class="abs" style="left:92px;top:174px;font-size:11px;line-height:14px;color:#fff;font-weight:bold;white-space:nowrap;letter-spacing:-.05px" id="roottxt">ramp focus test v4</div>
<div class="row" style="top:195px;width:138px"></div><div class="rtxt" style="left:85px;top:198px">Document Settings</div>
<div class="row" style="top:219px;width:110px"></div><div class="rtxt" style="left:85px;top:222px">Named Views</div>
<div class="row" style="top:243px;width:99px"></div><div class="rtxt" style="left:110px;top:246px">Origin</div>
<div class="row" style="top:267px;width:115px"></div><div class="rtxt" style="left:110px;top:270px">Sketches</div>
<div class="row" style="top:291px;width:139px"></div><div class="rtxt" style="left:110px;top:294px">Arrangements</div>
<div class="row" style="top:315px;width:111px"></div><div class="rtxt" style="left:110px;top:318px">side01:1</div>
<div class="row" style="top:339px;width:103px"></div><div class="rtxt" style="left:110px;top:342px">ramp:1</div>
<div class="row" style="top:363px;width:111px"></div><div class="rtxt" style="left:110px;top:366px">side02:1</div>
<div class="row" style="top:387px;width:99px"></div><div class="rtxt" style="left:110px;top:390px">back:1</div>
<div class="row" style="top:411px;width:115px"></div><div class="rtxt" style="left:110px;top:414px">support:1</div>
<div class="row" style="top:435px;width:123px"></div><div class="rtxt" style="left:110px;top:438px">test piece:1</div>
<svg style="left:0;top:168px" width="300" height="290" viewBox="0 168 300 290">
<defs><g id="eye"><path d="M-.200 0Q3.500 -5.200 8 -5.200Q12.500 -5.200 16.200 0Q12.500 5.200 8 5.200Q3.500 5.200 -.200 0Z" fill="#9b9b9b"/><circle cx="8" cy="0" r="3.200" fill="#f0f0f0"/><circle cx="8" cy="0" r="1.800" fill="#9b9b9b"/></g><g id="eyeoff"><path d="M0 0Q3.500 -4.800 8 -4.800Q12.500 -4.800 16 0Q12.500 4.800 8 4.800Q3.500 4.800 0 0Z" fill="none" stroke="#ababab" stroke-width="1"/><circle cx="8" cy="0" r="2.500" fill="none" stroke="#ababab" stroke-width="1"/><path d="M2.500 -5.800L13.700 5.800" stroke="#ababab" stroke-width="1"/></g><g id="folder"><path d="M0 -6.200H5.800L6.600 -5.200H16V6H0Z" fill="#9a9a9a"/><path d="M0 -4.200H7" stroke="#f0f0f0" stroke-width=".600"/></g><g id="body"><path d="M.300 -3.800L4.200 -7.700H15L15.700 -6.700V3.300L11.800 7.500H1L.300 6.500Z" fill="#fff" stroke="#333" stroke-width="1.200" stroke-linejoin="round"/><rect x="1.300" y="-2.800" width="9.500" height="9.300" fill="#dfe1e6"/><path d="M11.600 -3.800L15 -7V3L11.600 6.500Z" fill="#d2d4da"/></g><g id="exp"><path d="M.700 -5.600Q.700 -6.800 1.800 -6.200L8.400 -.700Q9.200 0 8.400 .700L1.800 6.200Q.700 6.800 .700 5.600Z" fill="#e0e0e0" stroke="#333" stroke-width="1.300" stroke-linejoin="round"/></g></defs>
<path d="M15.500 187.500L26 175.500V187.500Z" fill="#8a8a8a" stroke="#222" stroke-width="1" stroke-linejoin="round"/><use href="#eye" x="37" y="181"/><path d="M62.300 176.400L64.900 173.500H70.900V179.400H76.800L77.600 180.300V185.600L74.900 188.500H63.200L62.300 187.700Z" fill="#fff" stroke="#2c2f36" stroke-width="1.100" stroke-linejoin="round"/><path d="M63 177.200H67.900V188H63ZM69 182.800H74.300V188H69Z" fill="#e4e6ea"/><path d="M68.800 176.800L70.400 174.800V179.400L68.800 181.500ZM75.300 182.200L77 180.400V185.300L75.300 187.300Z" fill="#dcdee3"/><path d="M68.400 188.500V182.200L70.900 179.400" fill="none" stroke="#2c2f36" stroke-width="1.100"/><circle cx="211.700" cy="181" r="8" fill="#0f9d82"/><path d="M208.300 176.800H211.200Q215.600 176.800 215.600 181T211.200 185.200H208.300ZM210.200 178.500V183.500H211.200Q213.600 183.500 213.600 181T211.200 178.500Z" fill="#fff" fill-rule="evenodd"/><circle cx="217.300" cy="186" r="2.300" fill="#fff" stroke="#222" stroke-width=".900"/><circle cx="236.500" cy="181" r="6" fill="#fff" stroke="#222" stroke-width="1.100"/><circle cx="236.500" cy="181" r="2.500" fill="#222"/>
<use href="#exp" x="34" y="205"/><g transform="translate(62.600 205) rotate(-90)"><path d="M7.45 -1.51L7.45 1.51L4.84 2.16L4.95 1.89L6.33 4.20L4.20 6.33L1.89 4.95L2.16 4.84L1.51 7.45L-1.51 7.45L-2.16 4.84L-1.89 4.95L-4.20 6.33L-6.33 4.20L-4.95 1.89L-4.84 2.16L-7.45 1.51L-7.45 -1.51L-4.84 -2.16L-4.95 -1.89L-6.33 -4.20L-4.20 -6.33L-1.89 -4.95L-2.16 -4.84L-1.51 -7.45L1.51 -7.45L2.16 -4.84L1.89 -4.95L4.20 -6.33L6.33 -4.20L4.95 -1.89L4.84 -2.16Z" fill="#868686"/><circle r="2.700" fill="#f0f0f0"/></g>
<use href="#exp" x="34" y="229"/><use href="#folder" x="55" y="229"/>
<use href="#exp" x="34" y="253"/><use href="#eyeoff" x="55" y="253"/><use href="#folder" x="80" y="253"/>
<use href="#exp" x="34" y="277"/><use href="#eyeoff" x="55" y="277"/><use href="#folder" x="80" y="277"/>
<use href="#exp" x="34" y="301"/><use href="#eye" x="55" y="301"/><use href="#folder" x="80" y="301"/>
<use href="#exp" x="34" y="325"/><use href="#eye" x="55" y="325"/><path d="M82 325.7L86.200 319.3H95.700V328.6L92 332.5H82Z" fill="#f4f4f4" stroke="#555" stroke-width="1.100" stroke-linejoin="round"/><rect x="82.600" y="326.2" width="9" height="5.800" fill="#dcdcdc"/><path d="M92.200 325.5L95.200 320.2V328.4L92.200 331.8Z" fill="#b8b8b8"/><rect x="82.600" y="321" width="3.600" height="5" fill="#f0f0f0"/><g transform="translate(83.500 321.7)" fill="none" stroke="#222" stroke-width="1"><circle cy="-3.600" r="1.200"/><path d="M0 -2.400V2.600M-1.800 -1H1.800M-3.400 .200Q-2.600 2.600 0 2.600Q2.600 2.600 3.400 .200"/></g>
<use href="#exp" x="34" y="349"/><use href="#eye" x="55" y="349"/><use href="#body" x="80" y="349"/>
<use href="#exp" x="34" y="373"/><use href="#eye" x="55" y="373"/><use href="#body" x="80" y="373"/>
<use href="#exp" x="34" y="397"/><use href="#eye" x="55" y="397"/><use href="#body" x="80" y="397"/>
<use href="#exp" x="34" y="421"/><use href="#eye" x="55" y="421"/><use href="#body" x="80" y="421"/>
<use href="#exp" x="34" y="445"/><use href="#eye" x="55" y="445"/><use href="#body" x="80" y="445"/>
</svg>

<!-- BOTTOM -->
<div class="panel" style="top:950px;height:25px;border-top:none"></div><div class="ptxt" style="top:955px">COMMENTS</div>
<svg style="left:270px;top:950px" width="28" height="25" viewBox="270 950 28 25"><circle cx="281.500" cy="962" r="4.700" fill="#222"/><path d="M278.800 962H284.200M281.500 959.300V964.700" stroke="#fff" stroke-width="1.400"/></svg>
<div class="abs" style="left:0;top:979px;width:1913px;height:44px;background:#f0f0f0;border-top:1px solid #cfcfcf"></div>
<div class="abs" style="left:836px;top:949px;width:237px;height:24px;background:#f0f0f0"></div>
<svg style="left:0;top:940px" width="1913" height="83" viewBox="0 940 1913 83">
<defs><g id="tsk"><rect x="-7.500" y="-7" width="13.500" height="13.500" fill="#f4f4f4" stroke="#bdbdbd" stroke-width="1.400"/><path d="M-3.800 -3.800H3.200M-3.800 -3.800V3.400M3.200 -3.800Q3 2.500 -3.800 3.400" fill="none" stroke="#999" stroke-width=".900"/><g fill="#2f8fe8"><rect x="-8.500" y="-8" width="2" height="2"/><rect x="5" y="-8" width="2" height="2"/><rect x="-8.500" y="5.500" width="2" height="2"/><rect x="-4.800" y="-4.800" width="2" height="2"/><rect x="2.200" y="-4.800" width="2" height="2"/><rect x="-4.800" y="2.400" width="2" height="2"/></g><path d="M5.800 .300L8.300 2.600L2.800 7.300L.800 5.300Z" fill="#f2b23e"/><path d="M5.800 .300L6.800 -.700Q7.600 -1.200 8.400 -.300L9.200 .700Q9.600 1.500 8.900 2L8.300 2.600Z" fill="#ee3333"/><path d="M.800 5.300L2.800 7.300L-.300 8.200Z" fill="#555"/></g><g id="tex"><path d="M-7.800 -3.800L-5.200 -7.100H4.700L1.400 -3.800Z" fill="#8cc8f8"/><rect x="-7.800" y="-3.800" width="9.200" height="9.300" fill="#6aaee4"/><path d="M1.400 -3.800L4.700 -7.100V2.800L1.400 5.500Z" fill="#4b92cf"/><path d="M-7.800 6H1.400L4.700 3.200V5.300L1.400 8H-7.800Z" fill="#b9b9b9"/><path d="M6.300 5V-5.500" stroke="#333" stroke-width="1"/><path d="M4.900 -4.500L6.300 -7L7.700 -4.500Z" fill="#333"/></g><g id="tal"><path d="M-7.700 -7.500V7.500" stroke="#555" stroke-width="1.100"/><rect x="-5.500" y="-4.800" width="6.300" height="3.800" fill="#fff" stroke="#555" stroke-width="1"/><rect x="-5.500" y="1" width="12.500" height="4" fill="#63aee8" stroke="#4b92cf" stroke-width=".800"/></g><g id="tmv"><path d="M0 -5V5M-5 0H5" stroke="#333" stroke-width="1.500"/><path d="M0 -7.400L2.600 -3.800H-2.600ZM0 7.400L2.600 3.800H-2.600ZM-7.400 0L-3.800 -2.600V2.600ZM7.400 0L3.800 -2.600V2.600Z" fill="#333"/></g><g id="tcp"><rect x="-6.800" y="-7.100" width="6.400" height="7" rx="1.600" fill="#dcdcdc" stroke="#8a8a8a" stroke-width=".900"/><rect x=".300" y="0" width="6.400" height="7.200" rx="1.600" fill="#dcdcdc" stroke="#8a8a8a" stroke-width=".900"/><path d="M-5.500 1.200V3.500H-2.500" fill="none" stroke="#4a90e2" stroke-width="1"/><path d="M-3 2L-1.200 3.500L-3 5Z" fill="#4a90e2"/><path d="M-4.500 -5.500V-1.500M-2.700 -5.500V-1.500M2.600 1.600V5.600M4.400 1.600V5.600" stroke="#c2c2c2" stroke-width=".800"/></g><g id="tpt"><rect x="-7.600" y="-2.300" width="3.600" height="5.600" fill="#fff" stroke="#555" stroke-width="1.100"/><rect x="-1.700" y="-2.300" width="3.600" height="5.600" fill="#e6e6e6" stroke="#555" stroke-width="1.100"/><rect x="4.200" y="-2.300" width="3.600" height="5.600" fill="#cfcfcf" stroke="#555" stroke-width="1.100"/></g><g id="tar" fill="#8cc8f8"><rect x="-6" y="-4.300" width="3" height="5.600"/><rect x="-1.800" y="-5.200" width="2.900" height="2.300"/><rect x="-1.800" y="-1.300" width="2.900" height="2.600"/><rect x="-6" y="2.800" width="11" height="3.600"/></g><g id="dda"><path d="M0 0H6.600L3.300 4Z" fill="#333"/></g></defs>
<g fill="#555"><path d="M5 998H7V1010H5ZM16 998V1010L7.500 1004Z"/><path d="M38 998V1010L29.500 1004ZM40 1001H42V1007H40Z"/><path d="M55 996L67.500 1003.500L55 1011Z"/><path d="M83 998V1010L91.500 1004ZM79 1001H81V1007H79Z"/><path d="M105 998V1010L113.500 1004ZM114 998H116V1010H114Z"/></g>
<use href="#tsk" x="148" y="1002.500"/><use href="#tex" x="172" y="1002.500"/><use href="#tex" x="196" y="1002.500"/><use href="#tal" x="220" y="1002.500"/><use href="#tmv" x="244" y="1002.500"/><use href="#tcp" x="268" y="1002.500"/><use href="#tmv" x="292" y="1002.500"/><use href="#tex" x="316" y="1002.500"/><use href="#tal" x="340" y="1002.500"/><use href="#tmv" x="364" y="1002.500"/><use href="#tsk" x="388" y="1002.500"/><use href="#tex" x="412" y="1002.500"/><use href="#tex" x="436" y="1002.500"/><use href="#tpt" x="460" y="1002.500"/><use href="#tar" x="484" y="1002.500"/><use href="#tsk" x="508" y="1002.500"/>
<path d="M148 1019.900H508.700M148.1 1014V1020.700M172.1 1014V1020.700M196.1 1014V1020.700M220.1 1014V1020.700M244.1 1014V1020.700M268.1 1014V1020.700M292.1 1014V1020.700M316.1 1014V1020.700M340.1 1014V1020.700M364.1 1014V1020.700M388.1 1014V1020.700M412.1 1014V1020.700M436.1 1014V1020.700M460.1 1014V1020.700M484.1 1014V1020.700M508.1 1014V1020.700" stroke="#c2c2c2" stroke-width="1.700" fill="none"/>
<rect x="454" y="1015.200" width="9" height="8" fill="#777"/><path d="M458.500 1016.500V1023M455 1019.900H462" stroke="#fff" stroke-width="1.300"/>
<path d="M514 989.200H526V993.300L521.200 997.300V1021H519.200V997.300L514 993.300Z" fill="#555"/>
<g transform="translate(1892.500 1003.500) rotate(-90)"><path d="M7.45 -1.51L7.45 1.51L4.84 2.16L4.95 1.89L6.33 4.20L4.20 6.33L1.89 4.95L2.16 4.84L1.51 7.45L-1.51 7.45L-2.16 4.84L-1.89 4.95L-4.20 6.33L-6.33 4.20L-4.95 1.89L-4.84 2.16L-7.45 1.51L-7.45 -1.51L-4.84 -2.16L-4.95 -1.89L-6.33 -4.20L-4.20 -6.33L-1.89 -4.95L-2.16 -4.84L-1.51 -7.45L1.51 -7.45L2.16 -4.84L1.89 -4.95L4.20 -6.33L6.33 -4.20L4.95 -1.89L4.84 -2.16Z" fill="#7f7f7f"/><circle r="2.600" fill="#f0f0f0"/></g>
<path d="M1893.500 955A7.300 7.300 0 0 1 1900.800 962.300V969.600H1893.500A7.300 7.300 0 0 1 1893.500 955Z" fill="#000"/><path d="M1888.500 964L1897 959M1889 966L1898.500 960.500M1891 959.500L1896.500 965.500M1893.500 958.500L1898.500 964" stroke="#fff" stroke-width=".700" fill="none" opacity=".85"/>
<g fill="none" stroke="#2c2f36" stroke-width="1.100"><ellipse cx="846.400" cy="960.900" rx="3" ry="7.600"/><path d="M841.300 958Q838 960.800 841.300 963.600M845 963.500Q855.500 963.200 854.600 959.700Q853.800 957.600 851 957"/><path d="M847.500 956.200H850M848.700 955V957.400M850.300 958.300H852.800M851.500 957.100V959.500" stroke-width="1"/></g><path d="M844.900 960.500L846.400 958.800L847.900 960.500L846.400 962.200Z" fill="#1e88e5"/><use href="#dda" x="859.700" y="958.800"/><path d="M873.600 957.600L877.400 953.600L878.700 955.800L884.300 954L884.600 958.200Z" fill="#9a9a9a" stroke="#555" stroke-width=".700"/><rect x="872.600" y="958.400" width="15" height="10.100" fill="#fafafa" stroke="#2c2f36" stroke-width="1.300"/><rect x="875.400" y="961.600" width="9.200" height="4" fill="#aab0c0" stroke="#2c2f36" stroke-width="1.100"/><path d="M903 969Q900.500 966.800 898.300 962.300Q898.600 960.600 900.200 961.600L902 964.200L901 956.300Q901.600 954.600 902.900 956L903.800 960.800L903.600 954.600Q904.600 953.100 905.700 954.600L906 960.600L906.800 954.400Q907.900 953.300 908.800 954.700L908.200 961.200L909.800 956.800Q911 956 911.600 957.400L910.300 964Q910.300 967 908.500 969Z" fill="#eceef1" stroke="#2c2f36" stroke-width="1" stroke-linejoin="round"/><circle cx="928.500" cy="959.900" r="4.200" fill="#deecee" stroke="#444" stroke-width="1.200"/><path d="M926.200 958.500Q927 956.800 929 956.800" stroke="#fff" stroke-width="1" fill="none"/><path d="M931.800 963.300L936.200 967" stroke="#2c2f36" stroke-width="2.600" stroke-linecap="round"/><path d="M935.300 956.200H939.800M937.600 953.800V958.500M935.300 959.700H939.800" stroke="#2c2f36" stroke-width="1" fill="none"/><circle cx="957" cy="960" r="5.800" fill="#f2f2f2" stroke="#444" stroke-width="1.400"/><rect x="954" y="957.300" width="5.800" height="5.200" fill="#fff" stroke="#444" stroke-width="1.100"/><path d="M961.300 964.600L965.500 968.800" stroke="#333" stroke-width="2.400" stroke-linecap="round"/><use href="#dda" x="970.800" y="958.800"/><rect x="983.700" y="953.700" width="14.800" height="11.600" rx="1" fill="#f4f4f4" stroke="#444" stroke-width="1.300"/><rect x="986.200" y="956.200" width="9.800" height="6.600" rx="1" fill="#a3bfe6" stroke="#25458a" stroke-width="1.100"/><path d="M989 965.500H993.200V967.200H995V968.800H987.200V967.200H989Z" fill="#eee" stroke="#555" stroke-width=".800"/><use href="#dda" x="1000.900" y="958.800"/><rect x="1014.500" y="953.500" width="15" height="15" fill="#f6f6f6"/><path d="M1014.500 962.500H1029.500V968.500H1014.500Z" fill="#b5b5bd"/><path d="M1014.5 953.500V968.500M1014.500 953.5H1029.500M1017.5 953.500V968.500M1014.500 956.5H1029.500M1020.5 953.500V968.500M1014.500 959.5H1029.500M1023.5 953.500V968.500M1014.500 962.5H1029.500M1026.5 953.500V968.500M1014.500 965.5H1029.500M1029.5 953.500V968.500M1014.500 968.5H1029.500" stroke="#6e6e6e" stroke-width="1" fill="none"/><use href="#dda" x="1032.100" y="958.800"/><rect x="1045.5" y="954.5" width="7" height="6.500" rx="1.200" fill="#a9c2ea" stroke="#2a4a8c" stroke-width="1.100"/><rect x="1047.5" y="956.4" width="3" height="2.600" fill="#8fb0e0" stroke="#7fa0d8" stroke-width=".500"/><rect x="1053" y="954.5" width="7" height="6.500" rx="1.200" fill="#a9c2ea" stroke="#2a4a8c" stroke-width="1.100"/><rect x="1055" y="956.4" width="3" height="2.600" fill="#8fb0e0" stroke="#7fa0d8" stroke-width=".500"/><rect x="1045.5" y="961.5" width="7" height="6.500" rx="1.200" fill="#a9c2ea" stroke="#2a4a8c" stroke-width="1.100"/><rect x="1047.5" y="963.4" width="3" height="2.600" fill="#8fb0e0" stroke="#7fa0d8" stroke-width=".500"/><rect x="1053" y="961.5" width="7" height="6.500" rx="1.200" fill="#a9c2ea" stroke="#2a4a8c" stroke-width="1.100"/><rect x="1055" y="963.4" width="3" height="2.600" fill="#8fb0e0" stroke="#7fa0d8" stroke-width=".500"/><use href="#dda" x="1062.900" y="958.800"/>
</svg>

</body></html>
